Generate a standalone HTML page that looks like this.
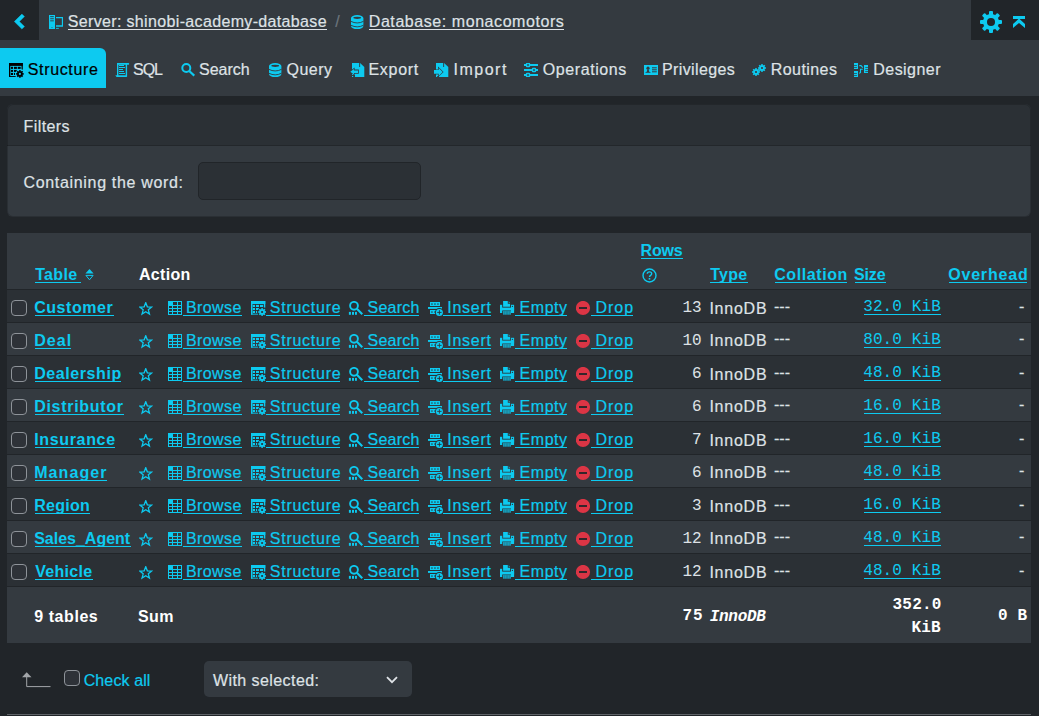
<!DOCTYPE html>
<html><head><meta charset="utf-8"><style>
html,body{margin:0;padding:0}
body{width:1039px;height:716px;overflow:hidden;background:#212529;position:relative;font-family:"Liberation Sans",sans-serif}
svg{display:block}
</style></head><body>
<div style="position:absolute;left:0px;top:0px;width:1039px;height:96px;background:#343a40;"></div>
<div style="position:absolute;left:0px;top:0px;width:39px;height:40px;background:#212529;"></div>
<div style="position:absolute;left:971px;top:0px;width:68px;height:40px;background:#212529;"></div>
<div style="position:absolute;left:0px;top:48px;width:106px;height:40px;background:#0dcaf0;border-radius:0 6px 0 0"></div>
<div style="position:absolute;left:7px;top:104px;width:1024px;height:113px;background:#343a40;border-radius:6px;overflow:hidden"></div>
<div style="position:absolute;left:7px;top:104px;width:1024px;height:41px;background:#2b3035;border-radius:6px 6px 0 0"></div>
<div style="position:absolute;left:7px;top:145px;width:1024px;height:1px;background:#23272b;"></div>
<div style="position:absolute;left:7px;top:104px;width:1024px;height:113px;background:transparent;border-radius:6px;box-sizing:border-box;border:1px solid rgba(0,0,0,0.18)"></div>
<div style="position:absolute;left:198px;top:162px;width:223px;height:38px;background:#2b3035;border-radius:5px;box-sizing:border-box;border:1px solid #212529"></div>
<div style="position:absolute;left:7px;top:233px;width:1024px;height:56px;background:#343a40;"></div>
<div style="position:absolute;left:7px;top:289px;width:1024px;height:1px;background:#212529;"></div>
<div style="position:absolute;left:7px;top:290px;width:1024px;height:32px;background:#2b3035;"></div>
<div style="position:absolute;left:7px;top:322px;width:1024px;height:1px;background:#212529;"></div>
<div style="position:absolute;left:7px;top:323px;width:1024px;height:32px;background:#343a40;"></div>
<div style="position:absolute;left:7px;top:355px;width:1024px;height:1px;background:#212529;"></div>
<div style="position:absolute;left:7px;top:356px;width:1024px;height:32px;background:#2b3035;"></div>
<div style="position:absolute;left:7px;top:388px;width:1024px;height:1px;background:#212529;"></div>
<div style="position:absolute;left:7px;top:389px;width:1024px;height:32px;background:#343a40;"></div>
<div style="position:absolute;left:7px;top:421px;width:1024px;height:1px;background:#212529;"></div>
<div style="position:absolute;left:7px;top:422px;width:1024px;height:32px;background:#2b3035;"></div>
<div style="position:absolute;left:7px;top:454px;width:1024px;height:1px;background:#212529;"></div>
<div style="position:absolute;left:7px;top:455px;width:1024px;height:32px;background:#343a40;"></div>
<div style="position:absolute;left:7px;top:487px;width:1024px;height:1px;background:#212529;"></div>
<div style="position:absolute;left:7px;top:488px;width:1024px;height:32px;background:#2b3035;"></div>
<div style="position:absolute;left:7px;top:520px;width:1024px;height:1px;background:#212529;"></div>
<div style="position:absolute;left:7px;top:521px;width:1024px;height:32px;background:#343a40;"></div>
<div style="position:absolute;left:7px;top:553px;width:1024px;height:1px;background:#212529;"></div>
<div style="position:absolute;left:7px;top:554px;width:1024px;height:32px;background:#2b3035;"></div>
<div style="position:absolute;left:7px;top:586px;width:1024px;height:1px;background:#212529;"></div>
<div style="position:absolute;left:7px;top:587px;width:1024px;height:56px;background:#343a40;"></div>
<div style="position:absolute;left:204px;top:661px;width:208px;height:36px;background:#343a40;border-radius:5px"></div>
<div style="position:absolute;left:7px;top:714px;width:1024px;height:1px;background:#5f6368;"></div>
<div style="position:absolute;left:68.00px;top:29px;width:259.00px;height:1px;background:#dee2e6"></div>
<div style="position:absolute;left:369.00px;top:29px;width:195.00px;height:1px;background:#dee2e6"></div>
<div style="position:absolute;left:35.00px;top:282px;width:46.00px;height:1px;background:#0dcaf0"></div>
<div style="position:absolute;left:641.00px;top:258px;width:42.00px;height:1px;background:#0dcaf0"></div>
<div style="position:absolute;left:710.00px;top:282px;width:38.00px;height:1px;background:#0dcaf0"></div>
<div style="position:absolute;left:775.00px;top:282px;width:72.00px;height:1px;background:#0dcaf0"></div>
<div style="position:absolute;left:855.00px;top:282px;width:31.00px;height:1px;background:#0dcaf0"></div>
<div style="position:absolute;left:949.00px;top:282px;width:78.00px;height:1px;background:#0dcaf0"></div>
<div style="position:absolute;left:35.00px;top:315px;width:78.50px;height:1px;background:#0dcaf0"></div>
<div style="position:absolute;left:182.50px;top:315px;width:59.00px;height:1px;background:#0dcaf0"></div>
<div style="position:absolute;left:266.00px;top:315px;width:74.00px;height:1px;background:#0dcaf0"></div>
<div style="position:absolute;left:364.00px;top:315px;width:55.00px;height:1px;background:#0dcaf0"></div>
<div style="position:absolute;left:443.30px;top:315px;width:48.20px;height:1px;background:#0dcaf0"></div>
<div style="position:absolute;left:515.30px;top:315px;width:51.70px;height:1px;background:#0dcaf0"></div>
<div style="position:absolute;left:591.00px;top:315px;width:41.80px;height:1px;background:#0dcaf0"></div>
<div style="position:absolute;left:864.00px;top:314px;width:76.50px;height:1px;background:#0dcaf0"></div>
<div style="position:absolute;left:11px;top:300px;width:16px;height:16px;box-sizing:border-box;border:1px solid #8e9399;border-radius:4px;background:#2e3238"></div>
<svg style="position:absolute;left:139px;top:301.7px" width="14" height="14" viewBox="0 0 14 14"><polygon points="6.75,0.70 8.34,4.82 12.74,5.05 9.32,7.83 10.45,12.10 6.75,9.70 3.05,12.10 4.18,7.83 0.76,5.05 5.16,4.82" fill="none" stroke="#0dcaf0" stroke-width="1.3" stroke-linejoin="miter"/></svg>
<svg style="position:absolute;left:168px;top:301px" width="14" height="14" viewBox="0 0 14 14"><rect x="0" y="0" width="14" height="14" fill="#0dcaf0"/><rect x="1" y="5" width="3" height="2" fill="#2b3035"/><rect x="1" y="8" width="3" height="2" fill="#2b3035"/><rect x="1" y="11" width="3" height="2" fill="#2b3035"/><rect x="5" y="1" width="4" height="3" fill="#2b3035"/><rect x="5" y="5" width="4" height="2" fill="#2b3035"/><rect x="5" y="8" width="4" height="2" fill="#2b3035"/><rect x="5" y="11" width="4" height="2" fill="#2b3035"/><rect x="10" y="1" width="3" height="3" fill="#2b3035"/><rect x="10" y="5" width="3" height="2" fill="#2b3035"/><rect x="10" y="8" width="3" height="2" fill="#2b3035"/><rect x="10" y="11" width="3" height="2" fill="#2b3035"/></svg>
<svg style="position:absolute;left:251px;top:301px" width="16" height="16" viewBox="0 0 16 16"><rect x="0" y="0" width="14.3" height="3" fill="#0dcaf0"/><rect x="0" y="0" width="1.5" height="13.6" fill="#0dcaf0"/><rect x="0" y="12.7" width="7" height="0.9" fill="#0dcaf0"/><rect x="12.8" y="0" width="1.5" height="6.6" fill="#0dcaf0"/><rect x="1.8" y="3.9" width="2.2" height="2.1" fill="#0dcaf0"/><rect x="5" y="3.9" width="3" height="2.1" fill="#0dcaf0"/><rect x="9" y="3.9" width="3" height="2.1" fill="#0dcaf0"/><rect x="1.8" y="7" width="2.2" height="2" fill="#0dcaf0"/><rect x="5" y="7" width="3" height="2" fill="#0dcaf0"/><rect x="1.8" y="9.9" width="2.2" height="2.1" fill="#0dcaf0"/><rect x="5" y="9.9" width="1.2" height="2.1" fill="#0dcaf0"/><circle cx="11.1" cy="11" r="4.7" fill="#2b3035"/><circle cx="11.1" cy="11" r="2.81" fill="#0dcaf0"/><rect x="10.28" y="7.10" width="1.64" height="3.90" fill="#0dcaf0" transform="rotate(0 11.1 11)"/><rect x="10.28" y="7.10" width="1.64" height="3.90" fill="#0dcaf0" transform="rotate(45 11.1 11)"/><rect x="10.28" y="7.10" width="1.64" height="3.90" fill="#0dcaf0" transform="rotate(90 11.1 11)"/><rect x="10.28" y="7.10" width="1.64" height="3.90" fill="#0dcaf0" transform="rotate(135 11.1 11)"/><rect x="10.28" y="7.10" width="1.64" height="3.90" fill="#0dcaf0" transform="rotate(180 11.1 11)"/><rect x="10.28" y="7.10" width="1.64" height="3.90" fill="#0dcaf0" transform="rotate(225 11.1 11)"/><rect x="10.28" y="7.10" width="1.64" height="3.90" fill="#0dcaf0" transform="rotate(270 11.1 11)"/><rect x="10.28" y="7.10" width="1.64" height="3.90" fill="#0dcaf0" transform="rotate(315 11.1 11)"/><circle cx="11.1" cy="11" r="1.09" fill="#2b3035"/></svg>
<svg style="position:absolute;left:348px;top:301px" width="15" height="15" viewBox="0 0 15 15"><circle cx="6" cy="4.8" r="3.9" fill="none" stroke="#0dcaf0" stroke-width="1.9"/><path d="M8.9 7.8L14.3 13.2" stroke="#0dcaf0" stroke-width="2.1"/><rect x="0.9" y="10.9" width="2" height="2.9" fill="#0dcaf0"/><rect x="4" y="10.9" width="2" height="2.9" fill="#0dcaf0"/><rect x="7" y="10.9" width="1.9" height="2.9" fill="#0dcaf0"/></svg>
<svg style="position:absolute;left:428px;top:301px" width="16" height="16" viewBox="0 0 16 16"><rect x="2" y="1" width="10" height="4" fill="#0dcaf0"/><rect x="0" y="6" width="14" height="1.9" fill="#0dcaf0"/><rect x="2" y="9" width="10" height="4" fill="#0dcaf0"/><rect x="3.3" y="2.4" width="1.3" height="1.3" fill="#2b3035"/><rect x="6.3" y="2.4" width="1.3" height="1.3" fill="#2b3035"/><rect x="9.3" y="2.4" width="1.3" height="1.3" fill="#2b3035"/><rect x="3.3" y="10.4" width="1.3" height="1.3" fill="#2b3035"/><rect x="6.3" y="10.4" width="1.3" height="1.3" fill="#2b3035"/><circle cx="11.4" cy="11.4" r="4.4" fill="#2b3035"/><circle cx="11.4" cy="11.4" r="3.5" fill="#0dcaf0"/><path d="M9.2 11.4H13.6M11.4 9.2V13.6" stroke="#2b3035" stroke-width="0.9"/></svg>
<svg style="position:absolute;left:500px;top:301px" width="15" height="15" viewBox="0 0 15 15"><path d="M3.1 -0.2H7.8V2.8H10.1V5.8H3.1Z" fill="#0dcaf0"/><path d="M8.7 0.2L10.1 1.8H8.7Z" fill="#0dcaf0"/><rect x="0" y="3.8" width="2.2" height="8.2" fill="#0dcaf0"/><rect x="11" y="3.8" width="3.1" height="8.2" fill="#0dcaf0"/><rect x="0" y="6.6" width="14.1" height="2.9" fill="#0dcaf0"/><circle cx="12.4" cy="5.4" r="0.6" fill="#2b3035"/><rect x="3.3" y="10" width="1.3" height="3.8" rx="0.5" fill="#0dcaf0"/><rect x="5.300000000000001" y="10" width="1.3" height="3.8" rx="0.5" fill="#0dcaf0"/><rect x="7.4" y="10" width="1.3" height="3.8" rx="0.5" fill="#0dcaf0"/><rect x="9.4" y="10" width="1.3" height="3.8" rx="0.5" fill="#0dcaf0"/></svg>
<svg style="position:absolute;left:576px;top:301px" width="15" height="15" viewBox="0 0 15 15"><circle cx="7" cy="7" r="7.1" fill="#dc3545"/><rect x="3" y="6.1" width="8" height="1.8" fill="#212529"/></svg>
<div style="position:absolute;left:35.00px;top:348px;width:35.90px;height:1px;background:#0dcaf0"></div>
<div style="position:absolute;left:182.50px;top:348px;width:59.00px;height:1px;background:#0dcaf0"></div>
<div style="position:absolute;left:266.00px;top:348px;width:74.00px;height:1px;background:#0dcaf0"></div>
<div style="position:absolute;left:364.00px;top:348px;width:55.00px;height:1px;background:#0dcaf0"></div>
<div style="position:absolute;left:443.30px;top:348px;width:48.20px;height:1px;background:#0dcaf0"></div>
<div style="position:absolute;left:515.30px;top:348px;width:51.70px;height:1px;background:#0dcaf0"></div>
<div style="position:absolute;left:591.00px;top:348px;width:41.80px;height:1px;background:#0dcaf0"></div>
<div style="position:absolute;left:864.00px;top:347px;width:76.50px;height:1px;background:#0dcaf0"></div>
<div style="position:absolute;left:11px;top:333px;width:16px;height:16px;box-sizing:border-box;border:1px solid #8e9399;border-radius:4px;background:#2e3238"></div>
<svg style="position:absolute;left:139px;top:334.7px" width="14" height="14" viewBox="0 0 14 14"><polygon points="6.75,0.70 8.34,4.82 12.74,5.05 9.32,7.83 10.45,12.10 6.75,9.70 3.05,12.10 4.18,7.83 0.76,5.05 5.16,4.82" fill="none" stroke="#0dcaf0" stroke-width="1.3" stroke-linejoin="miter"/></svg>
<svg style="position:absolute;left:168px;top:334px" width="14" height="14" viewBox="0 0 14 14"><rect x="0" y="0" width="14" height="14" fill="#0dcaf0"/><rect x="1" y="5" width="3" height="2" fill="#343a40"/><rect x="1" y="8" width="3" height="2" fill="#343a40"/><rect x="1" y="11" width="3" height="2" fill="#343a40"/><rect x="5" y="1" width="4" height="3" fill="#343a40"/><rect x="5" y="5" width="4" height="2" fill="#343a40"/><rect x="5" y="8" width="4" height="2" fill="#343a40"/><rect x="5" y="11" width="4" height="2" fill="#343a40"/><rect x="10" y="1" width="3" height="3" fill="#343a40"/><rect x="10" y="5" width="3" height="2" fill="#343a40"/><rect x="10" y="8" width="3" height="2" fill="#343a40"/><rect x="10" y="11" width="3" height="2" fill="#343a40"/></svg>
<svg style="position:absolute;left:251px;top:334px" width="16" height="16" viewBox="0 0 16 16"><rect x="0" y="0" width="14.3" height="3" fill="#0dcaf0"/><rect x="0" y="0" width="1.5" height="13.6" fill="#0dcaf0"/><rect x="0" y="12.7" width="7" height="0.9" fill="#0dcaf0"/><rect x="12.8" y="0" width="1.5" height="6.6" fill="#0dcaf0"/><rect x="1.8" y="3.9" width="2.2" height="2.1" fill="#0dcaf0"/><rect x="5" y="3.9" width="3" height="2.1" fill="#0dcaf0"/><rect x="9" y="3.9" width="3" height="2.1" fill="#0dcaf0"/><rect x="1.8" y="7" width="2.2" height="2" fill="#0dcaf0"/><rect x="5" y="7" width="3" height="2" fill="#0dcaf0"/><rect x="1.8" y="9.9" width="2.2" height="2.1" fill="#0dcaf0"/><rect x="5" y="9.9" width="1.2" height="2.1" fill="#0dcaf0"/><circle cx="11.1" cy="11" r="4.7" fill="#343a40"/><circle cx="11.1" cy="11" r="2.81" fill="#0dcaf0"/><rect x="10.28" y="7.10" width="1.64" height="3.90" fill="#0dcaf0" transform="rotate(0 11.1 11)"/><rect x="10.28" y="7.10" width="1.64" height="3.90" fill="#0dcaf0" transform="rotate(45 11.1 11)"/><rect x="10.28" y="7.10" width="1.64" height="3.90" fill="#0dcaf0" transform="rotate(90 11.1 11)"/><rect x="10.28" y="7.10" width="1.64" height="3.90" fill="#0dcaf0" transform="rotate(135 11.1 11)"/><rect x="10.28" y="7.10" width="1.64" height="3.90" fill="#0dcaf0" transform="rotate(180 11.1 11)"/><rect x="10.28" y="7.10" width="1.64" height="3.90" fill="#0dcaf0" transform="rotate(225 11.1 11)"/><rect x="10.28" y="7.10" width="1.64" height="3.90" fill="#0dcaf0" transform="rotate(270 11.1 11)"/><rect x="10.28" y="7.10" width="1.64" height="3.90" fill="#0dcaf0" transform="rotate(315 11.1 11)"/><circle cx="11.1" cy="11" r="1.09" fill="#343a40"/></svg>
<svg style="position:absolute;left:348px;top:334px" width="15" height="15" viewBox="0 0 15 15"><circle cx="6" cy="4.8" r="3.9" fill="none" stroke="#0dcaf0" stroke-width="1.9"/><path d="M8.9 7.8L14.3 13.2" stroke="#0dcaf0" stroke-width="2.1"/><rect x="0.9" y="10.9" width="2" height="2.9" fill="#0dcaf0"/><rect x="4" y="10.9" width="2" height="2.9" fill="#0dcaf0"/><rect x="7" y="10.9" width="1.9" height="2.9" fill="#0dcaf0"/></svg>
<svg style="position:absolute;left:428px;top:334px" width="16" height="16" viewBox="0 0 16 16"><rect x="2" y="1" width="10" height="4" fill="#0dcaf0"/><rect x="0" y="6" width="14" height="1.9" fill="#0dcaf0"/><rect x="2" y="9" width="10" height="4" fill="#0dcaf0"/><rect x="3.3" y="2.4" width="1.3" height="1.3" fill="#343a40"/><rect x="6.3" y="2.4" width="1.3" height="1.3" fill="#343a40"/><rect x="9.3" y="2.4" width="1.3" height="1.3" fill="#343a40"/><rect x="3.3" y="10.4" width="1.3" height="1.3" fill="#343a40"/><rect x="6.3" y="10.4" width="1.3" height="1.3" fill="#343a40"/><circle cx="11.4" cy="11.4" r="4.4" fill="#343a40"/><circle cx="11.4" cy="11.4" r="3.5" fill="#0dcaf0"/><path d="M9.2 11.4H13.6M11.4 9.2V13.6" stroke="#343a40" stroke-width="0.9"/></svg>
<svg style="position:absolute;left:500px;top:334px" width="15" height="15" viewBox="0 0 15 15"><path d="M3.1 -0.2H7.8V2.8H10.1V5.8H3.1Z" fill="#0dcaf0"/><path d="M8.7 0.2L10.1 1.8H8.7Z" fill="#0dcaf0"/><rect x="0" y="3.8" width="2.2" height="8.2" fill="#0dcaf0"/><rect x="11" y="3.8" width="3.1" height="8.2" fill="#0dcaf0"/><rect x="0" y="6.6" width="14.1" height="2.9" fill="#0dcaf0"/><circle cx="12.4" cy="5.4" r="0.6" fill="#343a40"/><rect x="3.3" y="10" width="1.3" height="3.8" rx="0.5" fill="#0dcaf0"/><rect x="5.300000000000001" y="10" width="1.3" height="3.8" rx="0.5" fill="#0dcaf0"/><rect x="7.4" y="10" width="1.3" height="3.8" rx="0.5" fill="#0dcaf0"/><rect x="9.4" y="10" width="1.3" height="3.8" rx="0.5" fill="#0dcaf0"/></svg>
<svg style="position:absolute;left:576px;top:334px" width="15" height="15" viewBox="0 0 15 15"><circle cx="7" cy="7" r="7.1" fill="#dc3545"/><rect x="3" y="6.1" width="8" height="1.8" fill="#212529"/></svg>
<div style="position:absolute;left:35.00px;top:381px;width:85.90px;height:1px;background:#0dcaf0"></div>
<div style="position:absolute;left:182.50px;top:381px;width:59.00px;height:1px;background:#0dcaf0"></div>
<div style="position:absolute;left:266.00px;top:381px;width:74.00px;height:1px;background:#0dcaf0"></div>
<div style="position:absolute;left:364.00px;top:381px;width:55.00px;height:1px;background:#0dcaf0"></div>
<div style="position:absolute;left:443.30px;top:381px;width:48.20px;height:1px;background:#0dcaf0"></div>
<div style="position:absolute;left:515.30px;top:381px;width:51.70px;height:1px;background:#0dcaf0"></div>
<div style="position:absolute;left:591.00px;top:381px;width:41.80px;height:1px;background:#0dcaf0"></div>
<div style="position:absolute;left:864.00px;top:380px;width:76.50px;height:1px;background:#0dcaf0"></div>
<div style="position:absolute;left:11px;top:366px;width:16px;height:16px;box-sizing:border-box;border:1px solid #8e9399;border-radius:4px;background:#2e3238"></div>
<svg style="position:absolute;left:139px;top:367.7px" width="14" height="14" viewBox="0 0 14 14"><polygon points="6.75,0.70 8.34,4.82 12.74,5.05 9.32,7.83 10.45,12.10 6.75,9.70 3.05,12.10 4.18,7.83 0.76,5.05 5.16,4.82" fill="none" stroke="#0dcaf0" stroke-width="1.3" stroke-linejoin="miter"/></svg>
<svg style="position:absolute;left:168px;top:367px" width="14" height="14" viewBox="0 0 14 14"><rect x="0" y="0" width="14" height="14" fill="#0dcaf0"/><rect x="1" y="5" width="3" height="2" fill="#2b3035"/><rect x="1" y="8" width="3" height="2" fill="#2b3035"/><rect x="1" y="11" width="3" height="2" fill="#2b3035"/><rect x="5" y="1" width="4" height="3" fill="#2b3035"/><rect x="5" y="5" width="4" height="2" fill="#2b3035"/><rect x="5" y="8" width="4" height="2" fill="#2b3035"/><rect x="5" y="11" width="4" height="2" fill="#2b3035"/><rect x="10" y="1" width="3" height="3" fill="#2b3035"/><rect x="10" y="5" width="3" height="2" fill="#2b3035"/><rect x="10" y="8" width="3" height="2" fill="#2b3035"/><rect x="10" y="11" width="3" height="2" fill="#2b3035"/></svg>
<svg style="position:absolute;left:251px;top:367px" width="16" height="16" viewBox="0 0 16 16"><rect x="0" y="0" width="14.3" height="3" fill="#0dcaf0"/><rect x="0" y="0" width="1.5" height="13.6" fill="#0dcaf0"/><rect x="0" y="12.7" width="7" height="0.9" fill="#0dcaf0"/><rect x="12.8" y="0" width="1.5" height="6.6" fill="#0dcaf0"/><rect x="1.8" y="3.9" width="2.2" height="2.1" fill="#0dcaf0"/><rect x="5" y="3.9" width="3" height="2.1" fill="#0dcaf0"/><rect x="9" y="3.9" width="3" height="2.1" fill="#0dcaf0"/><rect x="1.8" y="7" width="2.2" height="2" fill="#0dcaf0"/><rect x="5" y="7" width="3" height="2" fill="#0dcaf0"/><rect x="1.8" y="9.9" width="2.2" height="2.1" fill="#0dcaf0"/><rect x="5" y="9.9" width="1.2" height="2.1" fill="#0dcaf0"/><circle cx="11.1" cy="11" r="4.7" fill="#2b3035"/><circle cx="11.1" cy="11" r="2.81" fill="#0dcaf0"/><rect x="10.28" y="7.10" width="1.64" height="3.90" fill="#0dcaf0" transform="rotate(0 11.1 11)"/><rect x="10.28" y="7.10" width="1.64" height="3.90" fill="#0dcaf0" transform="rotate(45 11.1 11)"/><rect x="10.28" y="7.10" width="1.64" height="3.90" fill="#0dcaf0" transform="rotate(90 11.1 11)"/><rect x="10.28" y="7.10" width="1.64" height="3.90" fill="#0dcaf0" transform="rotate(135 11.1 11)"/><rect x="10.28" y="7.10" width="1.64" height="3.90" fill="#0dcaf0" transform="rotate(180 11.1 11)"/><rect x="10.28" y="7.10" width="1.64" height="3.90" fill="#0dcaf0" transform="rotate(225 11.1 11)"/><rect x="10.28" y="7.10" width="1.64" height="3.90" fill="#0dcaf0" transform="rotate(270 11.1 11)"/><rect x="10.28" y="7.10" width="1.64" height="3.90" fill="#0dcaf0" transform="rotate(315 11.1 11)"/><circle cx="11.1" cy="11" r="1.09" fill="#2b3035"/></svg>
<svg style="position:absolute;left:348px;top:367px" width="15" height="15" viewBox="0 0 15 15"><circle cx="6" cy="4.8" r="3.9" fill="none" stroke="#0dcaf0" stroke-width="1.9"/><path d="M8.9 7.8L14.3 13.2" stroke="#0dcaf0" stroke-width="2.1"/><rect x="0.9" y="10.9" width="2" height="2.9" fill="#0dcaf0"/><rect x="4" y="10.9" width="2" height="2.9" fill="#0dcaf0"/><rect x="7" y="10.9" width="1.9" height="2.9" fill="#0dcaf0"/></svg>
<svg style="position:absolute;left:428px;top:367px" width="16" height="16" viewBox="0 0 16 16"><rect x="2" y="1" width="10" height="4" fill="#0dcaf0"/><rect x="0" y="6" width="14" height="1.9" fill="#0dcaf0"/><rect x="2" y="9" width="10" height="4" fill="#0dcaf0"/><rect x="3.3" y="2.4" width="1.3" height="1.3" fill="#2b3035"/><rect x="6.3" y="2.4" width="1.3" height="1.3" fill="#2b3035"/><rect x="9.3" y="2.4" width="1.3" height="1.3" fill="#2b3035"/><rect x="3.3" y="10.4" width="1.3" height="1.3" fill="#2b3035"/><rect x="6.3" y="10.4" width="1.3" height="1.3" fill="#2b3035"/><circle cx="11.4" cy="11.4" r="4.4" fill="#2b3035"/><circle cx="11.4" cy="11.4" r="3.5" fill="#0dcaf0"/><path d="M9.2 11.4H13.6M11.4 9.2V13.6" stroke="#2b3035" stroke-width="0.9"/></svg>
<svg style="position:absolute;left:500px;top:367px" width="15" height="15" viewBox="0 0 15 15"><path d="M3.1 -0.2H7.8V2.8H10.1V5.8H3.1Z" fill="#0dcaf0"/><path d="M8.7 0.2L10.1 1.8H8.7Z" fill="#0dcaf0"/><rect x="0" y="3.8" width="2.2" height="8.2" fill="#0dcaf0"/><rect x="11" y="3.8" width="3.1" height="8.2" fill="#0dcaf0"/><rect x="0" y="6.6" width="14.1" height="2.9" fill="#0dcaf0"/><circle cx="12.4" cy="5.4" r="0.6" fill="#2b3035"/><rect x="3.3" y="10" width="1.3" height="3.8" rx="0.5" fill="#0dcaf0"/><rect x="5.300000000000001" y="10" width="1.3" height="3.8" rx="0.5" fill="#0dcaf0"/><rect x="7.4" y="10" width="1.3" height="3.8" rx="0.5" fill="#0dcaf0"/><rect x="9.4" y="10" width="1.3" height="3.8" rx="0.5" fill="#0dcaf0"/></svg>
<svg style="position:absolute;left:576px;top:367px" width="15" height="15" viewBox="0 0 15 15"><circle cx="7" cy="7" r="7.1" fill="#dc3545"/><rect x="3" y="6.1" width="8" height="1.8" fill="#212529"/></svg>
<div style="position:absolute;left:35.00px;top:414px;width:88.80px;height:1px;background:#0dcaf0"></div>
<div style="position:absolute;left:182.50px;top:414px;width:59.00px;height:1px;background:#0dcaf0"></div>
<div style="position:absolute;left:266.00px;top:414px;width:74.00px;height:1px;background:#0dcaf0"></div>
<div style="position:absolute;left:364.00px;top:414px;width:55.00px;height:1px;background:#0dcaf0"></div>
<div style="position:absolute;left:443.30px;top:414px;width:48.20px;height:1px;background:#0dcaf0"></div>
<div style="position:absolute;left:515.30px;top:414px;width:51.70px;height:1px;background:#0dcaf0"></div>
<div style="position:absolute;left:591.00px;top:414px;width:41.80px;height:1px;background:#0dcaf0"></div>
<div style="position:absolute;left:864.00px;top:413px;width:76.50px;height:1px;background:#0dcaf0"></div>
<div style="position:absolute;left:11px;top:399px;width:16px;height:16px;box-sizing:border-box;border:1px solid #8e9399;border-radius:4px;background:#2e3238"></div>
<svg style="position:absolute;left:139px;top:400.7px" width="14" height="14" viewBox="0 0 14 14"><polygon points="6.75,0.70 8.34,4.82 12.74,5.05 9.32,7.83 10.45,12.10 6.75,9.70 3.05,12.10 4.18,7.83 0.76,5.05 5.16,4.82" fill="none" stroke="#0dcaf0" stroke-width="1.3" stroke-linejoin="miter"/></svg>
<svg style="position:absolute;left:168px;top:400px" width="14" height="14" viewBox="0 0 14 14"><rect x="0" y="0" width="14" height="14" fill="#0dcaf0"/><rect x="1" y="5" width="3" height="2" fill="#343a40"/><rect x="1" y="8" width="3" height="2" fill="#343a40"/><rect x="1" y="11" width="3" height="2" fill="#343a40"/><rect x="5" y="1" width="4" height="3" fill="#343a40"/><rect x="5" y="5" width="4" height="2" fill="#343a40"/><rect x="5" y="8" width="4" height="2" fill="#343a40"/><rect x="5" y="11" width="4" height="2" fill="#343a40"/><rect x="10" y="1" width="3" height="3" fill="#343a40"/><rect x="10" y="5" width="3" height="2" fill="#343a40"/><rect x="10" y="8" width="3" height="2" fill="#343a40"/><rect x="10" y="11" width="3" height="2" fill="#343a40"/></svg>
<svg style="position:absolute;left:251px;top:400px" width="16" height="16" viewBox="0 0 16 16"><rect x="0" y="0" width="14.3" height="3" fill="#0dcaf0"/><rect x="0" y="0" width="1.5" height="13.6" fill="#0dcaf0"/><rect x="0" y="12.7" width="7" height="0.9" fill="#0dcaf0"/><rect x="12.8" y="0" width="1.5" height="6.6" fill="#0dcaf0"/><rect x="1.8" y="3.9" width="2.2" height="2.1" fill="#0dcaf0"/><rect x="5" y="3.9" width="3" height="2.1" fill="#0dcaf0"/><rect x="9" y="3.9" width="3" height="2.1" fill="#0dcaf0"/><rect x="1.8" y="7" width="2.2" height="2" fill="#0dcaf0"/><rect x="5" y="7" width="3" height="2" fill="#0dcaf0"/><rect x="1.8" y="9.9" width="2.2" height="2.1" fill="#0dcaf0"/><rect x="5" y="9.9" width="1.2" height="2.1" fill="#0dcaf0"/><circle cx="11.1" cy="11" r="4.7" fill="#343a40"/><circle cx="11.1" cy="11" r="2.81" fill="#0dcaf0"/><rect x="10.28" y="7.10" width="1.64" height="3.90" fill="#0dcaf0" transform="rotate(0 11.1 11)"/><rect x="10.28" y="7.10" width="1.64" height="3.90" fill="#0dcaf0" transform="rotate(45 11.1 11)"/><rect x="10.28" y="7.10" width="1.64" height="3.90" fill="#0dcaf0" transform="rotate(90 11.1 11)"/><rect x="10.28" y="7.10" width="1.64" height="3.90" fill="#0dcaf0" transform="rotate(135 11.1 11)"/><rect x="10.28" y="7.10" width="1.64" height="3.90" fill="#0dcaf0" transform="rotate(180 11.1 11)"/><rect x="10.28" y="7.10" width="1.64" height="3.90" fill="#0dcaf0" transform="rotate(225 11.1 11)"/><rect x="10.28" y="7.10" width="1.64" height="3.90" fill="#0dcaf0" transform="rotate(270 11.1 11)"/><rect x="10.28" y="7.10" width="1.64" height="3.90" fill="#0dcaf0" transform="rotate(315 11.1 11)"/><circle cx="11.1" cy="11" r="1.09" fill="#343a40"/></svg>
<svg style="position:absolute;left:348px;top:400px" width="15" height="15" viewBox="0 0 15 15"><circle cx="6" cy="4.8" r="3.9" fill="none" stroke="#0dcaf0" stroke-width="1.9"/><path d="M8.9 7.8L14.3 13.2" stroke="#0dcaf0" stroke-width="2.1"/><rect x="0.9" y="10.9" width="2" height="2.9" fill="#0dcaf0"/><rect x="4" y="10.9" width="2" height="2.9" fill="#0dcaf0"/><rect x="7" y="10.9" width="1.9" height="2.9" fill="#0dcaf0"/></svg>
<svg style="position:absolute;left:428px;top:400px" width="16" height="16" viewBox="0 0 16 16"><rect x="2" y="1" width="10" height="4" fill="#0dcaf0"/><rect x="0" y="6" width="14" height="1.9" fill="#0dcaf0"/><rect x="2" y="9" width="10" height="4" fill="#0dcaf0"/><rect x="3.3" y="2.4" width="1.3" height="1.3" fill="#343a40"/><rect x="6.3" y="2.4" width="1.3" height="1.3" fill="#343a40"/><rect x="9.3" y="2.4" width="1.3" height="1.3" fill="#343a40"/><rect x="3.3" y="10.4" width="1.3" height="1.3" fill="#343a40"/><rect x="6.3" y="10.4" width="1.3" height="1.3" fill="#343a40"/><circle cx="11.4" cy="11.4" r="4.4" fill="#343a40"/><circle cx="11.4" cy="11.4" r="3.5" fill="#0dcaf0"/><path d="M9.2 11.4H13.6M11.4 9.2V13.6" stroke="#343a40" stroke-width="0.9"/></svg>
<svg style="position:absolute;left:500px;top:400px" width="15" height="15" viewBox="0 0 15 15"><path d="M3.1 -0.2H7.8V2.8H10.1V5.8H3.1Z" fill="#0dcaf0"/><path d="M8.7 0.2L10.1 1.8H8.7Z" fill="#0dcaf0"/><rect x="0" y="3.8" width="2.2" height="8.2" fill="#0dcaf0"/><rect x="11" y="3.8" width="3.1" height="8.2" fill="#0dcaf0"/><rect x="0" y="6.6" width="14.1" height="2.9" fill="#0dcaf0"/><circle cx="12.4" cy="5.4" r="0.6" fill="#343a40"/><rect x="3.3" y="10" width="1.3" height="3.8" rx="0.5" fill="#0dcaf0"/><rect x="5.300000000000001" y="10" width="1.3" height="3.8" rx="0.5" fill="#0dcaf0"/><rect x="7.4" y="10" width="1.3" height="3.8" rx="0.5" fill="#0dcaf0"/><rect x="9.4" y="10" width="1.3" height="3.8" rx="0.5" fill="#0dcaf0"/></svg>
<svg style="position:absolute;left:576px;top:400px" width="15" height="15" viewBox="0 0 15 15"><circle cx="7" cy="7" r="7.1" fill="#dc3545"/><rect x="3" y="6.1" width="8" height="1.8" fill="#212529"/></svg>
<div style="position:absolute;left:35.00px;top:447px;width:80.00px;height:1px;background:#0dcaf0"></div>
<div style="position:absolute;left:182.50px;top:447px;width:59.00px;height:1px;background:#0dcaf0"></div>
<div style="position:absolute;left:266.00px;top:447px;width:74.00px;height:1px;background:#0dcaf0"></div>
<div style="position:absolute;left:364.00px;top:447px;width:55.00px;height:1px;background:#0dcaf0"></div>
<div style="position:absolute;left:443.30px;top:447px;width:48.20px;height:1px;background:#0dcaf0"></div>
<div style="position:absolute;left:515.30px;top:447px;width:51.70px;height:1px;background:#0dcaf0"></div>
<div style="position:absolute;left:591.00px;top:447px;width:41.80px;height:1px;background:#0dcaf0"></div>
<div style="position:absolute;left:864.00px;top:446px;width:76.50px;height:1px;background:#0dcaf0"></div>
<div style="position:absolute;left:11px;top:432px;width:16px;height:16px;box-sizing:border-box;border:1px solid #8e9399;border-radius:4px;background:#2e3238"></div>
<svg style="position:absolute;left:139px;top:433.7px" width="14" height="14" viewBox="0 0 14 14"><polygon points="6.75,0.70 8.34,4.82 12.74,5.05 9.32,7.83 10.45,12.10 6.75,9.70 3.05,12.10 4.18,7.83 0.76,5.05 5.16,4.82" fill="none" stroke="#0dcaf0" stroke-width="1.3" stroke-linejoin="miter"/></svg>
<svg style="position:absolute;left:168px;top:433px" width="14" height="14" viewBox="0 0 14 14"><rect x="0" y="0" width="14" height="14" fill="#0dcaf0"/><rect x="1" y="5" width="3" height="2" fill="#2b3035"/><rect x="1" y="8" width="3" height="2" fill="#2b3035"/><rect x="1" y="11" width="3" height="2" fill="#2b3035"/><rect x="5" y="1" width="4" height="3" fill="#2b3035"/><rect x="5" y="5" width="4" height="2" fill="#2b3035"/><rect x="5" y="8" width="4" height="2" fill="#2b3035"/><rect x="5" y="11" width="4" height="2" fill="#2b3035"/><rect x="10" y="1" width="3" height="3" fill="#2b3035"/><rect x="10" y="5" width="3" height="2" fill="#2b3035"/><rect x="10" y="8" width="3" height="2" fill="#2b3035"/><rect x="10" y="11" width="3" height="2" fill="#2b3035"/></svg>
<svg style="position:absolute;left:251px;top:433px" width="16" height="16" viewBox="0 0 16 16"><rect x="0" y="0" width="14.3" height="3" fill="#0dcaf0"/><rect x="0" y="0" width="1.5" height="13.6" fill="#0dcaf0"/><rect x="0" y="12.7" width="7" height="0.9" fill="#0dcaf0"/><rect x="12.8" y="0" width="1.5" height="6.6" fill="#0dcaf0"/><rect x="1.8" y="3.9" width="2.2" height="2.1" fill="#0dcaf0"/><rect x="5" y="3.9" width="3" height="2.1" fill="#0dcaf0"/><rect x="9" y="3.9" width="3" height="2.1" fill="#0dcaf0"/><rect x="1.8" y="7" width="2.2" height="2" fill="#0dcaf0"/><rect x="5" y="7" width="3" height="2" fill="#0dcaf0"/><rect x="1.8" y="9.9" width="2.2" height="2.1" fill="#0dcaf0"/><rect x="5" y="9.9" width="1.2" height="2.1" fill="#0dcaf0"/><circle cx="11.1" cy="11" r="4.7" fill="#2b3035"/><circle cx="11.1" cy="11" r="2.81" fill="#0dcaf0"/><rect x="10.28" y="7.10" width="1.64" height="3.90" fill="#0dcaf0" transform="rotate(0 11.1 11)"/><rect x="10.28" y="7.10" width="1.64" height="3.90" fill="#0dcaf0" transform="rotate(45 11.1 11)"/><rect x="10.28" y="7.10" width="1.64" height="3.90" fill="#0dcaf0" transform="rotate(90 11.1 11)"/><rect x="10.28" y="7.10" width="1.64" height="3.90" fill="#0dcaf0" transform="rotate(135 11.1 11)"/><rect x="10.28" y="7.10" width="1.64" height="3.90" fill="#0dcaf0" transform="rotate(180 11.1 11)"/><rect x="10.28" y="7.10" width="1.64" height="3.90" fill="#0dcaf0" transform="rotate(225 11.1 11)"/><rect x="10.28" y="7.10" width="1.64" height="3.90" fill="#0dcaf0" transform="rotate(270 11.1 11)"/><rect x="10.28" y="7.10" width="1.64" height="3.90" fill="#0dcaf0" transform="rotate(315 11.1 11)"/><circle cx="11.1" cy="11" r="1.09" fill="#2b3035"/></svg>
<svg style="position:absolute;left:348px;top:433px" width="15" height="15" viewBox="0 0 15 15"><circle cx="6" cy="4.8" r="3.9" fill="none" stroke="#0dcaf0" stroke-width="1.9"/><path d="M8.9 7.8L14.3 13.2" stroke="#0dcaf0" stroke-width="2.1"/><rect x="0.9" y="10.9" width="2" height="2.9" fill="#0dcaf0"/><rect x="4" y="10.9" width="2" height="2.9" fill="#0dcaf0"/><rect x="7" y="10.9" width="1.9" height="2.9" fill="#0dcaf0"/></svg>
<svg style="position:absolute;left:428px;top:433px" width="16" height="16" viewBox="0 0 16 16"><rect x="2" y="1" width="10" height="4" fill="#0dcaf0"/><rect x="0" y="6" width="14" height="1.9" fill="#0dcaf0"/><rect x="2" y="9" width="10" height="4" fill="#0dcaf0"/><rect x="3.3" y="2.4" width="1.3" height="1.3" fill="#2b3035"/><rect x="6.3" y="2.4" width="1.3" height="1.3" fill="#2b3035"/><rect x="9.3" y="2.4" width="1.3" height="1.3" fill="#2b3035"/><rect x="3.3" y="10.4" width="1.3" height="1.3" fill="#2b3035"/><rect x="6.3" y="10.4" width="1.3" height="1.3" fill="#2b3035"/><circle cx="11.4" cy="11.4" r="4.4" fill="#2b3035"/><circle cx="11.4" cy="11.4" r="3.5" fill="#0dcaf0"/><path d="M9.2 11.4H13.6M11.4 9.2V13.6" stroke="#2b3035" stroke-width="0.9"/></svg>
<svg style="position:absolute;left:500px;top:433px" width="15" height="15" viewBox="0 0 15 15"><path d="M3.1 -0.2H7.8V2.8H10.1V5.8H3.1Z" fill="#0dcaf0"/><path d="M8.7 0.2L10.1 1.8H8.7Z" fill="#0dcaf0"/><rect x="0" y="3.8" width="2.2" height="8.2" fill="#0dcaf0"/><rect x="11" y="3.8" width="3.1" height="8.2" fill="#0dcaf0"/><rect x="0" y="6.6" width="14.1" height="2.9" fill="#0dcaf0"/><circle cx="12.4" cy="5.4" r="0.6" fill="#2b3035"/><rect x="3.3" y="10" width="1.3" height="3.8" rx="0.5" fill="#0dcaf0"/><rect x="5.300000000000001" y="10" width="1.3" height="3.8" rx="0.5" fill="#0dcaf0"/><rect x="7.4" y="10" width="1.3" height="3.8" rx="0.5" fill="#0dcaf0"/><rect x="9.4" y="10" width="1.3" height="3.8" rx="0.5" fill="#0dcaf0"/></svg>
<svg style="position:absolute;left:576px;top:433px" width="15" height="15" viewBox="0 0 15 15"><circle cx="7" cy="7" r="7.1" fill="#dc3545"/><rect x="3" y="6.1" width="8" height="1.8" fill="#212529"/></svg>
<div style="position:absolute;left:35.00px;top:480px;width:72.20px;height:1px;background:#0dcaf0"></div>
<div style="position:absolute;left:182.50px;top:480px;width:59.00px;height:1px;background:#0dcaf0"></div>
<div style="position:absolute;left:266.00px;top:480px;width:74.00px;height:1px;background:#0dcaf0"></div>
<div style="position:absolute;left:364.00px;top:480px;width:55.00px;height:1px;background:#0dcaf0"></div>
<div style="position:absolute;left:443.30px;top:480px;width:48.20px;height:1px;background:#0dcaf0"></div>
<div style="position:absolute;left:515.30px;top:480px;width:51.70px;height:1px;background:#0dcaf0"></div>
<div style="position:absolute;left:591.00px;top:480px;width:41.80px;height:1px;background:#0dcaf0"></div>
<div style="position:absolute;left:864.00px;top:479px;width:76.50px;height:1px;background:#0dcaf0"></div>
<div style="position:absolute;left:11px;top:465px;width:16px;height:16px;box-sizing:border-box;border:1px solid #8e9399;border-radius:4px;background:#2e3238"></div>
<svg style="position:absolute;left:139px;top:466.7px" width="14" height="14" viewBox="0 0 14 14"><polygon points="6.75,0.70 8.34,4.82 12.74,5.05 9.32,7.83 10.45,12.10 6.75,9.70 3.05,12.10 4.18,7.83 0.76,5.05 5.16,4.82" fill="none" stroke="#0dcaf0" stroke-width="1.3" stroke-linejoin="miter"/></svg>
<svg style="position:absolute;left:168px;top:466px" width="14" height="14" viewBox="0 0 14 14"><rect x="0" y="0" width="14" height="14" fill="#0dcaf0"/><rect x="1" y="5" width="3" height="2" fill="#343a40"/><rect x="1" y="8" width="3" height="2" fill="#343a40"/><rect x="1" y="11" width="3" height="2" fill="#343a40"/><rect x="5" y="1" width="4" height="3" fill="#343a40"/><rect x="5" y="5" width="4" height="2" fill="#343a40"/><rect x="5" y="8" width="4" height="2" fill="#343a40"/><rect x="5" y="11" width="4" height="2" fill="#343a40"/><rect x="10" y="1" width="3" height="3" fill="#343a40"/><rect x="10" y="5" width="3" height="2" fill="#343a40"/><rect x="10" y="8" width="3" height="2" fill="#343a40"/><rect x="10" y="11" width="3" height="2" fill="#343a40"/></svg>
<svg style="position:absolute;left:251px;top:466px" width="16" height="16" viewBox="0 0 16 16"><rect x="0" y="0" width="14.3" height="3" fill="#0dcaf0"/><rect x="0" y="0" width="1.5" height="13.6" fill="#0dcaf0"/><rect x="0" y="12.7" width="7" height="0.9" fill="#0dcaf0"/><rect x="12.8" y="0" width="1.5" height="6.6" fill="#0dcaf0"/><rect x="1.8" y="3.9" width="2.2" height="2.1" fill="#0dcaf0"/><rect x="5" y="3.9" width="3" height="2.1" fill="#0dcaf0"/><rect x="9" y="3.9" width="3" height="2.1" fill="#0dcaf0"/><rect x="1.8" y="7" width="2.2" height="2" fill="#0dcaf0"/><rect x="5" y="7" width="3" height="2" fill="#0dcaf0"/><rect x="1.8" y="9.9" width="2.2" height="2.1" fill="#0dcaf0"/><rect x="5" y="9.9" width="1.2" height="2.1" fill="#0dcaf0"/><circle cx="11.1" cy="11" r="4.7" fill="#343a40"/><circle cx="11.1" cy="11" r="2.81" fill="#0dcaf0"/><rect x="10.28" y="7.10" width="1.64" height="3.90" fill="#0dcaf0" transform="rotate(0 11.1 11)"/><rect x="10.28" y="7.10" width="1.64" height="3.90" fill="#0dcaf0" transform="rotate(45 11.1 11)"/><rect x="10.28" y="7.10" width="1.64" height="3.90" fill="#0dcaf0" transform="rotate(90 11.1 11)"/><rect x="10.28" y="7.10" width="1.64" height="3.90" fill="#0dcaf0" transform="rotate(135 11.1 11)"/><rect x="10.28" y="7.10" width="1.64" height="3.90" fill="#0dcaf0" transform="rotate(180 11.1 11)"/><rect x="10.28" y="7.10" width="1.64" height="3.90" fill="#0dcaf0" transform="rotate(225 11.1 11)"/><rect x="10.28" y="7.10" width="1.64" height="3.90" fill="#0dcaf0" transform="rotate(270 11.1 11)"/><rect x="10.28" y="7.10" width="1.64" height="3.90" fill="#0dcaf0" transform="rotate(315 11.1 11)"/><circle cx="11.1" cy="11" r="1.09" fill="#343a40"/></svg>
<svg style="position:absolute;left:348px;top:466px" width="15" height="15" viewBox="0 0 15 15"><circle cx="6" cy="4.8" r="3.9" fill="none" stroke="#0dcaf0" stroke-width="1.9"/><path d="M8.9 7.8L14.3 13.2" stroke="#0dcaf0" stroke-width="2.1"/><rect x="0.9" y="10.9" width="2" height="2.9" fill="#0dcaf0"/><rect x="4" y="10.9" width="2" height="2.9" fill="#0dcaf0"/><rect x="7" y="10.9" width="1.9" height="2.9" fill="#0dcaf0"/></svg>
<svg style="position:absolute;left:428px;top:466px" width="16" height="16" viewBox="0 0 16 16"><rect x="2" y="1" width="10" height="4" fill="#0dcaf0"/><rect x="0" y="6" width="14" height="1.9" fill="#0dcaf0"/><rect x="2" y="9" width="10" height="4" fill="#0dcaf0"/><rect x="3.3" y="2.4" width="1.3" height="1.3" fill="#343a40"/><rect x="6.3" y="2.4" width="1.3" height="1.3" fill="#343a40"/><rect x="9.3" y="2.4" width="1.3" height="1.3" fill="#343a40"/><rect x="3.3" y="10.4" width="1.3" height="1.3" fill="#343a40"/><rect x="6.3" y="10.4" width="1.3" height="1.3" fill="#343a40"/><circle cx="11.4" cy="11.4" r="4.4" fill="#343a40"/><circle cx="11.4" cy="11.4" r="3.5" fill="#0dcaf0"/><path d="M9.2 11.4H13.6M11.4 9.2V13.6" stroke="#343a40" stroke-width="0.9"/></svg>
<svg style="position:absolute;left:500px;top:466px" width="15" height="15" viewBox="0 0 15 15"><path d="M3.1 -0.2H7.8V2.8H10.1V5.8H3.1Z" fill="#0dcaf0"/><path d="M8.7 0.2L10.1 1.8H8.7Z" fill="#0dcaf0"/><rect x="0" y="3.8" width="2.2" height="8.2" fill="#0dcaf0"/><rect x="11" y="3.8" width="3.1" height="8.2" fill="#0dcaf0"/><rect x="0" y="6.6" width="14.1" height="2.9" fill="#0dcaf0"/><circle cx="12.4" cy="5.4" r="0.6" fill="#343a40"/><rect x="3.3" y="10" width="1.3" height="3.8" rx="0.5" fill="#0dcaf0"/><rect x="5.300000000000001" y="10" width="1.3" height="3.8" rx="0.5" fill="#0dcaf0"/><rect x="7.4" y="10" width="1.3" height="3.8" rx="0.5" fill="#0dcaf0"/><rect x="9.4" y="10" width="1.3" height="3.8" rx="0.5" fill="#0dcaf0"/></svg>
<svg style="position:absolute;left:576px;top:466px" width="15" height="15" viewBox="0 0 15 15"><circle cx="7" cy="7" r="7.1" fill="#dc3545"/><rect x="3" y="6.1" width="8" height="1.8" fill="#212529"/></svg>
<div style="position:absolute;left:35.00px;top:513px;width:55.10px;height:1px;background:#0dcaf0"></div>
<div style="position:absolute;left:182.50px;top:513px;width:59.00px;height:1px;background:#0dcaf0"></div>
<div style="position:absolute;left:266.00px;top:513px;width:74.00px;height:1px;background:#0dcaf0"></div>
<div style="position:absolute;left:364.00px;top:513px;width:55.00px;height:1px;background:#0dcaf0"></div>
<div style="position:absolute;left:443.30px;top:513px;width:48.20px;height:1px;background:#0dcaf0"></div>
<div style="position:absolute;left:515.30px;top:513px;width:51.70px;height:1px;background:#0dcaf0"></div>
<div style="position:absolute;left:591.00px;top:513px;width:41.80px;height:1px;background:#0dcaf0"></div>
<div style="position:absolute;left:864.00px;top:512px;width:76.50px;height:1px;background:#0dcaf0"></div>
<div style="position:absolute;left:11px;top:498px;width:16px;height:16px;box-sizing:border-box;border:1px solid #8e9399;border-radius:4px;background:#2e3238"></div>
<svg style="position:absolute;left:139px;top:499.7px" width="14" height="14" viewBox="0 0 14 14"><polygon points="6.75,0.70 8.34,4.82 12.74,5.05 9.32,7.83 10.45,12.10 6.75,9.70 3.05,12.10 4.18,7.83 0.76,5.05 5.16,4.82" fill="none" stroke="#0dcaf0" stroke-width="1.3" stroke-linejoin="miter"/></svg>
<svg style="position:absolute;left:168px;top:499px" width="14" height="14" viewBox="0 0 14 14"><rect x="0" y="0" width="14" height="14" fill="#0dcaf0"/><rect x="1" y="5" width="3" height="2" fill="#2b3035"/><rect x="1" y="8" width="3" height="2" fill="#2b3035"/><rect x="1" y="11" width="3" height="2" fill="#2b3035"/><rect x="5" y="1" width="4" height="3" fill="#2b3035"/><rect x="5" y="5" width="4" height="2" fill="#2b3035"/><rect x="5" y="8" width="4" height="2" fill="#2b3035"/><rect x="5" y="11" width="4" height="2" fill="#2b3035"/><rect x="10" y="1" width="3" height="3" fill="#2b3035"/><rect x="10" y="5" width="3" height="2" fill="#2b3035"/><rect x="10" y="8" width="3" height="2" fill="#2b3035"/><rect x="10" y="11" width="3" height="2" fill="#2b3035"/></svg>
<svg style="position:absolute;left:251px;top:499px" width="16" height="16" viewBox="0 0 16 16"><rect x="0" y="0" width="14.3" height="3" fill="#0dcaf0"/><rect x="0" y="0" width="1.5" height="13.6" fill="#0dcaf0"/><rect x="0" y="12.7" width="7" height="0.9" fill="#0dcaf0"/><rect x="12.8" y="0" width="1.5" height="6.6" fill="#0dcaf0"/><rect x="1.8" y="3.9" width="2.2" height="2.1" fill="#0dcaf0"/><rect x="5" y="3.9" width="3" height="2.1" fill="#0dcaf0"/><rect x="9" y="3.9" width="3" height="2.1" fill="#0dcaf0"/><rect x="1.8" y="7" width="2.2" height="2" fill="#0dcaf0"/><rect x="5" y="7" width="3" height="2" fill="#0dcaf0"/><rect x="1.8" y="9.9" width="2.2" height="2.1" fill="#0dcaf0"/><rect x="5" y="9.9" width="1.2" height="2.1" fill="#0dcaf0"/><circle cx="11.1" cy="11" r="4.7" fill="#2b3035"/><circle cx="11.1" cy="11" r="2.81" fill="#0dcaf0"/><rect x="10.28" y="7.10" width="1.64" height="3.90" fill="#0dcaf0" transform="rotate(0 11.1 11)"/><rect x="10.28" y="7.10" width="1.64" height="3.90" fill="#0dcaf0" transform="rotate(45 11.1 11)"/><rect x="10.28" y="7.10" width="1.64" height="3.90" fill="#0dcaf0" transform="rotate(90 11.1 11)"/><rect x="10.28" y="7.10" width="1.64" height="3.90" fill="#0dcaf0" transform="rotate(135 11.1 11)"/><rect x="10.28" y="7.10" width="1.64" height="3.90" fill="#0dcaf0" transform="rotate(180 11.1 11)"/><rect x="10.28" y="7.10" width="1.64" height="3.90" fill="#0dcaf0" transform="rotate(225 11.1 11)"/><rect x="10.28" y="7.10" width="1.64" height="3.90" fill="#0dcaf0" transform="rotate(270 11.1 11)"/><rect x="10.28" y="7.10" width="1.64" height="3.90" fill="#0dcaf0" transform="rotate(315 11.1 11)"/><circle cx="11.1" cy="11" r="1.09" fill="#2b3035"/></svg>
<svg style="position:absolute;left:348px;top:499px" width="15" height="15" viewBox="0 0 15 15"><circle cx="6" cy="4.8" r="3.9" fill="none" stroke="#0dcaf0" stroke-width="1.9"/><path d="M8.9 7.8L14.3 13.2" stroke="#0dcaf0" stroke-width="2.1"/><rect x="0.9" y="10.9" width="2" height="2.9" fill="#0dcaf0"/><rect x="4" y="10.9" width="2" height="2.9" fill="#0dcaf0"/><rect x="7" y="10.9" width="1.9" height="2.9" fill="#0dcaf0"/></svg>
<svg style="position:absolute;left:428px;top:499px" width="16" height="16" viewBox="0 0 16 16"><rect x="2" y="1" width="10" height="4" fill="#0dcaf0"/><rect x="0" y="6" width="14" height="1.9" fill="#0dcaf0"/><rect x="2" y="9" width="10" height="4" fill="#0dcaf0"/><rect x="3.3" y="2.4" width="1.3" height="1.3" fill="#2b3035"/><rect x="6.3" y="2.4" width="1.3" height="1.3" fill="#2b3035"/><rect x="9.3" y="2.4" width="1.3" height="1.3" fill="#2b3035"/><rect x="3.3" y="10.4" width="1.3" height="1.3" fill="#2b3035"/><rect x="6.3" y="10.4" width="1.3" height="1.3" fill="#2b3035"/><circle cx="11.4" cy="11.4" r="4.4" fill="#2b3035"/><circle cx="11.4" cy="11.4" r="3.5" fill="#0dcaf0"/><path d="M9.2 11.4H13.6M11.4 9.2V13.6" stroke="#2b3035" stroke-width="0.9"/></svg>
<svg style="position:absolute;left:500px;top:499px" width="15" height="15" viewBox="0 0 15 15"><path d="M3.1 -0.2H7.8V2.8H10.1V5.8H3.1Z" fill="#0dcaf0"/><path d="M8.7 0.2L10.1 1.8H8.7Z" fill="#0dcaf0"/><rect x="0" y="3.8" width="2.2" height="8.2" fill="#0dcaf0"/><rect x="11" y="3.8" width="3.1" height="8.2" fill="#0dcaf0"/><rect x="0" y="6.6" width="14.1" height="2.9" fill="#0dcaf0"/><circle cx="12.4" cy="5.4" r="0.6" fill="#2b3035"/><rect x="3.3" y="10" width="1.3" height="3.8" rx="0.5" fill="#0dcaf0"/><rect x="5.300000000000001" y="10" width="1.3" height="3.8" rx="0.5" fill="#0dcaf0"/><rect x="7.4" y="10" width="1.3" height="3.8" rx="0.5" fill="#0dcaf0"/><rect x="9.4" y="10" width="1.3" height="3.8" rx="0.5" fill="#0dcaf0"/></svg>
<svg style="position:absolute;left:576px;top:499px" width="15" height="15" viewBox="0 0 15 15"><circle cx="7" cy="7" r="7.1" fill="#dc3545"/><rect x="3" y="6.1" width="8" height="1.8" fill="#212529"/></svg>
<div style="position:absolute;left:35.00px;top:546px;width:95.60px;height:1px;background:#0dcaf0"></div>
<div style="position:absolute;left:182.50px;top:546px;width:59.00px;height:1px;background:#0dcaf0"></div>
<div style="position:absolute;left:266.00px;top:546px;width:74.00px;height:1px;background:#0dcaf0"></div>
<div style="position:absolute;left:364.00px;top:546px;width:55.00px;height:1px;background:#0dcaf0"></div>
<div style="position:absolute;left:443.30px;top:546px;width:48.20px;height:1px;background:#0dcaf0"></div>
<div style="position:absolute;left:515.30px;top:546px;width:51.70px;height:1px;background:#0dcaf0"></div>
<div style="position:absolute;left:591.00px;top:546px;width:41.80px;height:1px;background:#0dcaf0"></div>
<div style="position:absolute;left:864.00px;top:545px;width:76.50px;height:1px;background:#0dcaf0"></div>
<div style="position:absolute;left:11px;top:531px;width:16px;height:16px;box-sizing:border-box;border:1px solid #8e9399;border-radius:4px;background:#2e3238"></div>
<svg style="position:absolute;left:139px;top:532.7px" width="14" height="14" viewBox="0 0 14 14"><polygon points="6.75,0.70 8.34,4.82 12.74,5.05 9.32,7.83 10.45,12.10 6.75,9.70 3.05,12.10 4.18,7.83 0.76,5.05 5.16,4.82" fill="none" stroke="#0dcaf0" stroke-width="1.3" stroke-linejoin="miter"/></svg>
<svg style="position:absolute;left:168px;top:532px" width="14" height="14" viewBox="0 0 14 14"><rect x="0" y="0" width="14" height="14" fill="#0dcaf0"/><rect x="1" y="5" width="3" height="2" fill="#343a40"/><rect x="1" y="8" width="3" height="2" fill="#343a40"/><rect x="1" y="11" width="3" height="2" fill="#343a40"/><rect x="5" y="1" width="4" height="3" fill="#343a40"/><rect x="5" y="5" width="4" height="2" fill="#343a40"/><rect x="5" y="8" width="4" height="2" fill="#343a40"/><rect x="5" y="11" width="4" height="2" fill="#343a40"/><rect x="10" y="1" width="3" height="3" fill="#343a40"/><rect x="10" y="5" width="3" height="2" fill="#343a40"/><rect x="10" y="8" width="3" height="2" fill="#343a40"/><rect x="10" y="11" width="3" height="2" fill="#343a40"/></svg>
<svg style="position:absolute;left:251px;top:532px" width="16" height="16" viewBox="0 0 16 16"><rect x="0" y="0" width="14.3" height="3" fill="#0dcaf0"/><rect x="0" y="0" width="1.5" height="13.6" fill="#0dcaf0"/><rect x="0" y="12.7" width="7" height="0.9" fill="#0dcaf0"/><rect x="12.8" y="0" width="1.5" height="6.6" fill="#0dcaf0"/><rect x="1.8" y="3.9" width="2.2" height="2.1" fill="#0dcaf0"/><rect x="5" y="3.9" width="3" height="2.1" fill="#0dcaf0"/><rect x="9" y="3.9" width="3" height="2.1" fill="#0dcaf0"/><rect x="1.8" y="7" width="2.2" height="2" fill="#0dcaf0"/><rect x="5" y="7" width="3" height="2" fill="#0dcaf0"/><rect x="1.8" y="9.9" width="2.2" height="2.1" fill="#0dcaf0"/><rect x="5" y="9.9" width="1.2" height="2.1" fill="#0dcaf0"/><circle cx="11.1" cy="11" r="4.7" fill="#343a40"/><circle cx="11.1" cy="11" r="2.81" fill="#0dcaf0"/><rect x="10.28" y="7.10" width="1.64" height="3.90" fill="#0dcaf0" transform="rotate(0 11.1 11)"/><rect x="10.28" y="7.10" width="1.64" height="3.90" fill="#0dcaf0" transform="rotate(45 11.1 11)"/><rect x="10.28" y="7.10" width="1.64" height="3.90" fill="#0dcaf0" transform="rotate(90 11.1 11)"/><rect x="10.28" y="7.10" width="1.64" height="3.90" fill="#0dcaf0" transform="rotate(135 11.1 11)"/><rect x="10.28" y="7.10" width="1.64" height="3.90" fill="#0dcaf0" transform="rotate(180 11.1 11)"/><rect x="10.28" y="7.10" width="1.64" height="3.90" fill="#0dcaf0" transform="rotate(225 11.1 11)"/><rect x="10.28" y="7.10" width="1.64" height="3.90" fill="#0dcaf0" transform="rotate(270 11.1 11)"/><rect x="10.28" y="7.10" width="1.64" height="3.90" fill="#0dcaf0" transform="rotate(315 11.1 11)"/><circle cx="11.1" cy="11" r="1.09" fill="#343a40"/></svg>
<svg style="position:absolute;left:348px;top:532px" width="15" height="15" viewBox="0 0 15 15"><circle cx="6" cy="4.8" r="3.9" fill="none" stroke="#0dcaf0" stroke-width="1.9"/><path d="M8.9 7.8L14.3 13.2" stroke="#0dcaf0" stroke-width="2.1"/><rect x="0.9" y="10.9" width="2" height="2.9" fill="#0dcaf0"/><rect x="4" y="10.9" width="2" height="2.9" fill="#0dcaf0"/><rect x="7" y="10.9" width="1.9" height="2.9" fill="#0dcaf0"/></svg>
<svg style="position:absolute;left:428px;top:532px" width="16" height="16" viewBox="0 0 16 16"><rect x="2" y="1" width="10" height="4" fill="#0dcaf0"/><rect x="0" y="6" width="14" height="1.9" fill="#0dcaf0"/><rect x="2" y="9" width="10" height="4" fill="#0dcaf0"/><rect x="3.3" y="2.4" width="1.3" height="1.3" fill="#343a40"/><rect x="6.3" y="2.4" width="1.3" height="1.3" fill="#343a40"/><rect x="9.3" y="2.4" width="1.3" height="1.3" fill="#343a40"/><rect x="3.3" y="10.4" width="1.3" height="1.3" fill="#343a40"/><rect x="6.3" y="10.4" width="1.3" height="1.3" fill="#343a40"/><circle cx="11.4" cy="11.4" r="4.4" fill="#343a40"/><circle cx="11.4" cy="11.4" r="3.5" fill="#0dcaf0"/><path d="M9.2 11.4H13.6M11.4 9.2V13.6" stroke="#343a40" stroke-width="0.9"/></svg>
<svg style="position:absolute;left:500px;top:532px" width="15" height="15" viewBox="0 0 15 15"><path d="M3.1 -0.2H7.8V2.8H10.1V5.8H3.1Z" fill="#0dcaf0"/><path d="M8.7 0.2L10.1 1.8H8.7Z" fill="#0dcaf0"/><rect x="0" y="3.8" width="2.2" height="8.2" fill="#0dcaf0"/><rect x="11" y="3.8" width="3.1" height="8.2" fill="#0dcaf0"/><rect x="0" y="6.6" width="14.1" height="2.9" fill="#0dcaf0"/><circle cx="12.4" cy="5.4" r="0.6" fill="#343a40"/><rect x="3.3" y="10" width="1.3" height="3.8" rx="0.5" fill="#0dcaf0"/><rect x="5.300000000000001" y="10" width="1.3" height="3.8" rx="0.5" fill="#0dcaf0"/><rect x="7.4" y="10" width="1.3" height="3.8" rx="0.5" fill="#0dcaf0"/><rect x="9.4" y="10" width="1.3" height="3.8" rx="0.5" fill="#0dcaf0"/></svg>
<svg style="position:absolute;left:576px;top:532px" width="15" height="15" viewBox="0 0 15 15"><circle cx="7" cy="7" r="7.1" fill="#dc3545"/><rect x="3" y="6.1" width="8" height="1.8" fill="#212529"/></svg>
<div style="position:absolute;left:35.00px;top:579px;width:57.50px;height:1px;background:#0dcaf0"></div>
<div style="position:absolute;left:182.50px;top:579px;width:59.00px;height:1px;background:#0dcaf0"></div>
<div style="position:absolute;left:266.00px;top:579px;width:74.00px;height:1px;background:#0dcaf0"></div>
<div style="position:absolute;left:364.00px;top:579px;width:55.00px;height:1px;background:#0dcaf0"></div>
<div style="position:absolute;left:443.30px;top:579px;width:48.20px;height:1px;background:#0dcaf0"></div>
<div style="position:absolute;left:515.30px;top:579px;width:51.70px;height:1px;background:#0dcaf0"></div>
<div style="position:absolute;left:591.00px;top:579px;width:41.80px;height:1px;background:#0dcaf0"></div>
<div style="position:absolute;left:864.00px;top:578px;width:76.50px;height:1px;background:#0dcaf0"></div>
<div style="position:absolute;left:11px;top:564px;width:16px;height:16px;box-sizing:border-box;border:1px solid #8e9399;border-radius:4px;background:#2e3238"></div>
<svg style="position:absolute;left:139px;top:565.7px" width="14" height="14" viewBox="0 0 14 14"><polygon points="6.75,0.70 8.34,4.82 12.74,5.05 9.32,7.83 10.45,12.10 6.75,9.70 3.05,12.10 4.18,7.83 0.76,5.05 5.16,4.82" fill="none" stroke="#0dcaf0" stroke-width="1.3" stroke-linejoin="miter"/></svg>
<svg style="position:absolute;left:168px;top:565px" width="14" height="14" viewBox="0 0 14 14"><rect x="0" y="0" width="14" height="14" fill="#0dcaf0"/><rect x="1" y="5" width="3" height="2" fill="#2b3035"/><rect x="1" y="8" width="3" height="2" fill="#2b3035"/><rect x="1" y="11" width="3" height="2" fill="#2b3035"/><rect x="5" y="1" width="4" height="3" fill="#2b3035"/><rect x="5" y="5" width="4" height="2" fill="#2b3035"/><rect x="5" y="8" width="4" height="2" fill="#2b3035"/><rect x="5" y="11" width="4" height="2" fill="#2b3035"/><rect x="10" y="1" width="3" height="3" fill="#2b3035"/><rect x="10" y="5" width="3" height="2" fill="#2b3035"/><rect x="10" y="8" width="3" height="2" fill="#2b3035"/><rect x="10" y="11" width="3" height="2" fill="#2b3035"/></svg>
<svg style="position:absolute;left:251px;top:565px" width="16" height="16" viewBox="0 0 16 16"><rect x="0" y="0" width="14.3" height="3" fill="#0dcaf0"/><rect x="0" y="0" width="1.5" height="13.6" fill="#0dcaf0"/><rect x="0" y="12.7" width="7" height="0.9" fill="#0dcaf0"/><rect x="12.8" y="0" width="1.5" height="6.6" fill="#0dcaf0"/><rect x="1.8" y="3.9" width="2.2" height="2.1" fill="#0dcaf0"/><rect x="5" y="3.9" width="3" height="2.1" fill="#0dcaf0"/><rect x="9" y="3.9" width="3" height="2.1" fill="#0dcaf0"/><rect x="1.8" y="7" width="2.2" height="2" fill="#0dcaf0"/><rect x="5" y="7" width="3" height="2" fill="#0dcaf0"/><rect x="1.8" y="9.9" width="2.2" height="2.1" fill="#0dcaf0"/><rect x="5" y="9.9" width="1.2" height="2.1" fill="#0dcaf0"/><circle cx="11.1" cy="11" r="4.7" fill="#2b3035"/><circle cx="11.1" cy="11" r="2.81" fill="#0dcaf0"/><rect x="10.28" y="7.10" width="1.64" height="3.90" fill="#0dcaf0" transform="rotate(0 11.1 11)"/><rect x="10.28" y="7.10" width="1.64" height="3.90" fill="#0dcaf0" transform="rotate(45 11.1 11)"/><rect x="10.28" y="7.10" width="1.64" height="3.90" fill="#0dcaf0" transform="rotate(90 11.1 11)"/><rect x="10.28" y="7.10" width="1.64" height="3.90" fill="#0dcaf0" transform="rotate(135 11.1 11)"/><rect x="10.28" y="7.10" width="1.64" height="3.90" fill="#0dcaf0" transform="rotate(180 11.1 11)"/><rect x="10.28" y="7.10" width="1.64" height="3.90" fill="#0dcaf0" transform="rotate(225 11.1 11)"/><rect x="10.28" y="7.10" width="1.64" height="3.90" fill="#0dcaf0" transform="rotate(270 11.1 11)"/><rect x="10.28" y="7.10" width="1.64" height="3.90" fill="#0dcaf0" transform="rotate(315 11.1 11)"/><circle cx="11.1" cy="11" r="1.09" fill="#2b3035"/></svg>
<svg style="position:absolute;left:348px;top:565px" width="15" height="15" viewBox="0 0 15 15"><circle cx="6" cy="4.8" r="3.9" fill="none" stroke="#0dcaf0" stroke-width="1.9"/><path d="M8.9 7.8L14.3 13.2" stroke="#0dcaf0" stroke-width="2.1"/><rect x="0.9" y="10.9" width="2" height="2.9" fill="#0dcaf0"/><rect x="4" y="10.9" width="2" height="2.9" fill="#0dcaf0"/><rect x="7" y="10.9" width="1.9" height="2.9" fill="#0dcaf0"/></svg>
<svg style="position:absolute;left:428px;top:565px" width="16" height="16" viewBox="0 0 16 16"><rect x="2" y="1" width="10" height="4" fill="#0dcaf0"/><rect x="0" y="6" width="14" height="1.9" fill="#0dcaf0"/><rect x="2" y="9" width="10" height="4" fill="#0dcaf0"/><rect x="3.3" y="2.4" width="1.3" height="1.3" fill="#2b3035"/><rect x="6.3" y="2.4" width="1.3" height="1.3" fill="#2b3035"/><rect x="9.3" y="2.4" width="1.3" height="1.3" fill="#2b3035"/><rect x="3.3" y="10.4" width="1.3" height="1.3" fill="#2b3035"/><rect x="6.3" y="10.4" width="1.3" height="1.3" fill="#2b3035"/><circle cx="11.4" cy="11.4" r="4.4" fill="#2b3035"/><circle cx="11.4" cy="11.4" r="3.5" fill="#0dcaf0"/><path d="M9.2 11.4H13.6M11.4 9.2V13.6" stroke="#2b3035" stroke-width="0.9"/></svg>
<svg style="position:absolute;left:500px;top:565px" width="15" height="15" viewBox="0 0 15 15"><path d="M3.1 -0.2H7.8V2.8H10.1V5.8H3.1Z" fill="#0dcaf0"/><path d="M8.7 0.2L10.1 1.8H8.7Z" fill="#0dcaf0"/><rect x="0" y="3.8" width="2.2" height="8.2" fill="#0dcaf0"/><rect x="11" y="3.8" width="3.1" height="8.2" fill="#0dcaf0"/><rect x="0" y="6.6" width="14.1" height="2.9" fill="#0dcaf0"/><circle cx="12.4" cy="5.4" r="0.6" fill="#2b3035"/><rect x="3.3" y="10" width="1.3" height="3.8" rx="0.5" fill="#0dcaf0"/><rect x="5.300000000000001" y="10" width="1.3" height="3.8" rx="0.5" fill="#0dcaf0"/><rect x="7.4" y="10" width="1.3" height="3.8" rx="0.5" fill="#0dcaf0"/><rect x="9.4" y="10" width="1.3" height="3.8" rx="0.5" fill="#0dcaf0"/></svg>
<svg style="position:absolute;left:576px;top:565px" width="15" height="15" viewBox="0 0 15 15"><circle cx="7" cy="7" r="7.1" fill="#dc3545"/><rect x="3" y="6.1" width="8" height="1.8" fill="#212529"/></svg>
<div style="position:absolute;left:64px;top:670px;width:16px;height:16px;box-sizing:border-box;border:1px solid #8e9399;border-radius:4px;background:#2e3238"></div>
<span style="position:absolute;left:67.70px;top:12px;font:16px 'Liberation Sans',sans-serif;line-height:20px;white-space:pre;color:#dee2e6;letter-spacing:0.348px;-webkit-text-stroke:0.2px currentColor">Server: shinobi-academy-database</span>
<span style="position:absolute;left:335.30px;top:12px;font:16px 'Liberation Sans',sans-serif;line-height:20px;white-space:pre;color:#6c757d;letter-spacing:0.000px;-webkit-text-stroke:0.2px currentColor">/</span>
<span style="position:absolute;left:368.80px;top:12px;font:16px 'Liberation Sans',sans-serif;line-height:20px;white-space:pre;color:#dee2e6;letter-spacing:0.562px;-webkit-text-stroke:0.2px currentColor">Database: monacomotors</span>
<span style="position:absolute;left:27.75px;top:60px;font:16px 'Liberation Sans',sans-serif;line-height:20px;white-space:pre;color:#000;letter-spacing:0.656px;-webkit-text-stroke:0.2px currentColor">Structure</span>
<span style="position:absolute;left:133.00px;top:60px;font:16px 'Liberation Sans',sans-serif;line-height:20px;white-space:pre;color:#dee2e6;letter-spacing:-1.000px;-webkit-text-stroke:0.2px currentColor">SQL</span>
<span style="position:absolute;left:199.00px;top:60px;font:16px 'Liberation Sans',sans-serif;line-height:20px;white-space:pre;color:#dee2e6;letter-spacing:0.000px;-webkit-text-stroke:0.2px currentColor">Search</span>
<span style="position:absolute;left:286.50px;top:60px;font:16px 'Liberation Sans',sans-serif;line-height:20px;white-space:pre;color:#dee2e6;letter-spacing:0.500px;-webkit-text-stroke:0.2px currentColor">Query</span>
<span style="position:absolute;left:368.50px;top:60px;font:16px 'Liberation Sans',sans-serif;line-height:20px;white-space:pre;color:#dee2e6;letter-spacing:0.700px;-webkit-text-stroke:0.2px currentColor">Export</span>
<span style="position:absolute;left:453.50px;top:60px;font:16px 'Liberation Sans',sans-serif;line-height:20px;white-space:pre;color:#dee2e6;letter-spacing:1.500px;-webkit-text-stroke:0.2px currentColor">Import</span>
<span style="position:absolute;left:542.75px;top:60px;font:16px 'Liberation Sans',sans-serif;line-height:20px;white-space:pre;color:#dee2e6;letter-spacing:0.583px;-webkit-text-stroke:0.2px currentColor">Operations</span>
<span style="position:absolute;left:662.00px;top:60px;font:16px 'Liberation Sans',sans-serif;line-height:20px;white-space:pre;color:#dee2e6;letter-spacing:0.389px;-webkit-text-stroke:0.2px currentColor">Privileges</span>
<span style="position:absolute;left:770.75px;top:60px;font:16px 'Liberation Sans',sans-serif;line-height:20px;white-space:pre;color:#dee2e6;letter-spacing:0.429px;-webkit-text-stroke:0.2px currentColor">Routines</span>
<span style="position:absolute;left:873.25px;top:60px;font:16px 'Liberation Sans',sans-serif;line-height:20px;white-space:pre;color:#dee2e6;letter-spacing:0.464px;-webkit-text-stroke:0.2px currentColor">Designer</span>
<span style="position:absolute;left:23.50px;top:117px;font:16px 'Liberation Sans',sans-serif;line-height:20px;white-space:pre;color:#dee2e6;letter-spacing:0.417px;-webkit-text-stroke:0.2px currentColor">Filters</span>
<span style="position:absolute;left:23.50px;top:173px;font:16px 'Liberation Sans',sans-serif;line-height:20px;white-space:pre;color:#dee2e6;letter-spacing:0.671px;-webkit-text-stroke:0.2px currentColor">Containing the word:</span>
<span style="position:absolute;left:35.20px;top:265px;font:bold 16px 'Liberation Sans',sans-serif;line-height:20px;white-space:pre;color:#0dcaf0;letter-spacing:0.350px;">Table</span>
<span style="position:absolute;left:139.00px;top:265px;font:bold 16px 'Liberation Sans',sans-serif;line-height:20px;white-space:pre;color:#fff;letter-spacing:0.320px;">Action</span>
<span style="position:absolute;left:640.50px;top:241px;font:bold 16px 'Liberation Sans',sans-serif;line-height:20px;white-space:pre;color:#0dcaf0;letter-spacing:-0.167px;">Rows</span>
<span style="position:absolute;left:710.30px;top:265px;font:bold 16px 'Liberation Sans',sans-serif;line-height:20px;white-space:pre;color:#0dcaf0;letter-spacing:0.233px;">Type</span>
<span style="position:absolute;left:774.20px;top:265px;font:bold 16px 'Liberation Sans',sans-serif;line-height:20px;white-space:pre;color:#0dcaf0;letter-spacing:0.587px;">Collation</span>
<span style="position:absolute;left:853.90px;top:265px;font:bold 16px 'Liberation Sans',sans-serif;line-height:20px;white-space:pre;color:#0dcaf0;letter-spacing:-0.067px;">Size</span>
<span style="position:absolute;left:948.20px;top:265px;font:bold 16px 'Liberation Sans',sans-serif;line-height:20px;white-space:pre;color:#0dcaf0;letter-spacing:0.814px;">Overhead</span>
<span style="position:absolute;left:34.20px;top:298px;font:bold 16px 'Liberation Sans',sans-serif;line-height:20px;white-space:pre;color:#0dcaf0;letter-spacing:0.543px;">Customer</span>
<span style="position:absolute;left:186.00px;top:298px;font:16px 'Liberation Sans',sans-serif;line-height:20px;white-space:pre;color:#0dcaf0;letter-spacing:0.400px;-webkit-text-stroke:0.2px currentColor">Browse</span>
<span style="position:absolute;left:269.80px;top:298px;font:16px 'Liberation Sans',sans-serif;line-height:20px;white-space:pre;color:#0dcaf0;letter-spacing:0.737px;-webkit-text-stroke:0.2px currentColor">Structure</span>
<span style="position:absolute;left:367.60px;top:298px;font:16px 'Liberation Sans',sans-serif;line-height:20px;white-space:pre;color:#0dcaf0;letter-spacing:0.200px;-webkit-text-stroke:0.2px currentColor">Search</span>
<span style="position:absolute;left:447.20px;top:298px;font:16px 'Liberation Sans',sans-serif;line-height:20px;white-space:pre;color:#0dcaf0;letter-spacing:0.760px;-webkit-text-stroke:0.2px currentColor">Insert</span>
<span style="position:absolute;left:519.60px;top:298px;font:16px 'Liberation Sans',sans-serif;line-height:20px;white-space:pre;color:#0dcaf0;letter-spacing:0.525px;-webkit-text-stroke:0.2px currentColor">Empty</span>
<span style="position:absolute;left:595.40px;top:298px;font:16px 'Liberation Sans',sans-serif;line-height:20px;white-space:pre;color:#0dcaf0;letter-spacing:1.000px;-webkit-text-stroke:0.2px currentColor">Drop</span>
<span style="position:absolute;left:682.50px;top:298px;font:16px 'Liberation Mono',monospace;line-height:20px;white-space:pre;color:#dee2e6;letter-spacing:0.000px;">13</span>
<span style="position:absolute;left:709.40px;top:299px;font:16px 'Liberation Sans',sans-serif;line-height:20px;white-space:pre;color:#dee2e6;letter-spacing:0.760px;-webkit-text-stroke:0.2px currentColor">InnoDB</span>
<span style="position:absolute;left:774.00px;top:297px;font:16px 'Liberation Sans',sans-serif;line-height:20px;white-space:pre;color:#dee2e6;letter-spacing:0.000px;-webkit-text-stroke:0.2px currentColor">---</span>
<span style="position:absolute;left:863.20px;top:297px;font:16px 'Liberation Mono',monospace;line-height:20px;white-space:pre;color:#0dcaf0;letter-spacing:0.114px;">32.0 KiB</span>
<span style="position:absolute;left:1019.00px;top:297px;font:16px 'Liberation Sans',sans-serif;line-height:20px;white-space:pre;color:#dee2e6;letter-spacing:0.000px;-webkit-text-stroke:0.2px currentColor">-</span>
<span style="position:absolute;left:34.20px;top:331px;font:bold 16px 'Liberation Sans',sans-serif;line-height:20px;white-space:pre;color:#0dcaf0;letter-spacing:1.067px;">Deal</span>
<span style="position:absolute;left:186.00px;top:331px;font:16px 'Liberation Sans',sans-serif;line-height:20px;white-space:pre;color:#0dcaf0;letter-spacing:0.400px;-webkit-text-stroke:0.2px currentColor">Browse</span>
<span style="position:absolute;left:269.80px;top:331px;font:16px 'Liberation Sans',sans-serif;line-height:20px;white-space:pre;color:#0dcaf0;letter-spacing:0.737px;-webkit-text-stroke:0.2px currentColor">Structure</span>
<span style="position:absolute;left:367.60px;top:331px;font:16px 'Liberation Sans',sans-serif;line-height:20px;white-space:pre;color:#0dcaf0;letter-spacing:0.200px;-webkit-text-stroke:0.2px currentColor">Search</span>
<span style="position:absolute;left:447.20px;top:331px;font:16px 'Liberation Sans',sans-serif;line-height:20px;white-space:pre;color:#0dcaf0;letter-spacing:0.760px;-webkit-text-stroke:0.2px currentColor">Insert</span>
<span style="position:absolute;left:519.60px;top:331px;font:16px 'Liberation Sans',sans-serif;line-height:20px;white-space:pre;color:#0dcaf0;letter-spacing:0.525px;-webkit-text-stroke:0.2px currentColor">Empty</span>
<span style="position:absolute;left:595.40px;top:331px;font:16px 'Liberation Sans',sans-serif;line-height:20px;white-space:pre;color:#0dcaf0;letter-spacing:1.000px;-webkit-text-stroke:0.2px currentColor">Drop</span>
<span style="position:absolute;left:682.50px;top:331px;font:16px 'Liberation Mono',monospace;line-height:20px;white-space:pre;color:#dee2e6;letter-spacing:0.000px;">10</span>
<span style="position:absolute;left:709.40px;top:331px;font:16px 'Liberation Sans',sans-serif;line-height:20px;white-space:pre;color:#dee2e6;letter-spacing:0.760px;-webkit-text-stroke:0.2px currentColor">InnoDB</span>
<span style="position:absolute;left:774.00px;top:329px;font:16px 'Liberation Sans',sans-serif;line-height:20px;white-space:pre;color:#dee2e6;letter-spacing:0.000px;-webkit-text-stroke:0.2px currentColor">---</span>
<span style="position:absolute;left:863.20px;top:330px;font:16px 'Liberation Mono',monospace;line-height:20px;white-space:pre;color:#0dcaf0;letter-spacing:0.114px;">80.0 KiB</span>
<span style="position:absolute;left:1019.00px;top:329px;font:16px 'Liberation Sans',sans-serif;line-height:20px;white-space:pre;color:#dee2e6;letter-spacing:0.000px;-webkit-text-stroke:0.2px currentColor">-</span>
<span style="position:absolute;left:34.20px;top:364px;font:bold 16px 'Liberation Sans',sans-serif;line-height:20px;white-space:pre;color:#0dcaf0;letter-spacing:0.578px;">Dealership</span>
<span style="position:absolute;left:186.00px;top:364px;font:16px 'Liberation Sans',sans-serif;line-height:20px;white-space:pre;color:#0dcaf0;letter-spacing:0.400px;-webkit-text-stroke:0.2px currentColor">Browse</span>
<span style="position:absolute;left:269.80px;top:364px;font:16px 'Liberation Sans',sans-serif;line-height:20px;white-space:pre;color:#0dcaf0;letter-spacing:0.737px;-webkit-text-stroke:0.2px currentColor">Structure</span>
<span style="position:absolute;left:367.60px;top:364px;font:16px 'Liberation Sans',sans-serif;line-height:20px;white-space:pre;color:#0dcaf0;letter-spacing:0.200px;-webkit-text-stroke:0.2px currentColor">Search</span>
<span style="position:absolute;left:447.20px;top:364px;font:16px 'Liberation Sans',sans-serif;line-height:20px;white-space:pre;color:#0dcaf0;letter-spacing:0.760px;-webkit-text-stroke:0.2px currentColor">Insert</span>
<span style="position:absolute;left:519.60px;top:364px;font:16px 'Liberation Sans',sans-serif;line-height:20px;white-space:pre;color:#0dcaf0;letter-spacing:0.525px;-webkit-text-stroke:0.2px currentColor">Empty</span>
<span style="position:absolute;left:595.40px;top:364px;font:16px 'Liberation Sans',sans-serif;line-height:20px;white-space:pre;color:#0dcaf0;letter-spacing:1.000px;-webkit-text-stroke:0.2px currentColor">Drop</span>
<span style="position:absolute;left:692.10px;top:364px;font:16px 'Liberation Mono',monospace;line-height:20px;white-space:pre;color:#dee2e6;letter-spacing:0.000px;">6</span>
<span style="position:absolute;left:709.40px;top:365px;font:16px 'Liberation Sans',sans-serif;line-height:20px;white-space:pre;color:#dee2e6;letter-spacing:0.760px;-webkit-text-stroke:0.2px currentColor">InnoDB</span>
<span style="position:absolute;left:774.00px;top:363px;font:16px 'Liberation Sans',sans-serif;line-height:20px;white-space:pre;color:#dee2e6;letter-spacing:0.000px;-webkit-text-stroke:0.2px currentColor">---</span>
<span style="position:absolute;left:863.20px;top:363px;font:16px 'Liberation Mono',monospace;line-height:20px;white-space:pre;color:#0dcaf0;letter-spacing:0.114px;">48.0 KiB</span>
<span style="position:absolute;left:1019.00px;top:363px;font:16px 'Liberation Sans',sans-serif;line-height:20px;white-space:pre;color:#dee2e6;letter-spacing:0.000px;-webkit-text-stroke:0.2px currentColor">-</span>
<span style="position:absolute;left:34.20px;top:397px;font:bold 16px 'Liberation Sans',sans-serif;line-height:20px;white-space:pre;color:#0dcaf0;letter-spacing:0.710px;">Distributor</span>
<span style="position:absolute;left:186.00px;top:397px;font:16px 'Liberation Sans',sans-serif;line-height:20px;white-space:pre;color:#0dcaf0;letter-spacing:0.400px;-webkit-text-stroke:0.2px currentColor">Browse</span>
<span style="position:absolute;left:269.80px;top:397px;font:16px 'Liberation Sans',sans-serif;line-height:20px;white-space:pre;color:#0dcaf0;letter-spacing:0.737px;-webkit-text-stroke:0.2px currentColor">Structure</span>
<span style="position:absolute;left:367.60px;top:397px;font:16px 'Liberation Sans',sans-serif;line-height:20px;white-space:pre;color:#0dcaf0;letter-spacing:0.200px;-webkit-text-stroke:0.2px currentColor">Search</span>
<span style="position:absolute;left:447.20px;top:397px;font:16px 'Liberation Sans',sans-serif;line-height:20px;white-space:pre;color:#0dcaf0;letter-spacing:0.760px;-webkit-text-stroke:0.2px currentColor">Insert</span>
<span style="position:absolute;left:519.60px;top:397px;font:16px 'Liberation Sans',sans-serif;line-height:20px;white-space:pre;color:#0dcaf0;letter-spacing:0.525px;-webkit-text-stroke:0.2px currentColor">Empty</span>
<span style="position:absolute;left:595.40px;top:397px;font:16px 'Liberation Sans',sans-serif;line-height:20px;white-space:pre;color:#0dcaf0;letter-spacing:1.000px;-webkit-text-stroke:0.2px currentColor">Drop</span>
<span style="position:absolute;left:692.10px;top:397px;font:16px 'Liberation Mono',monospace;line-height:20px;white-space:pre;color:#dee2e6;letter-spacing:0.000px;">6</span>
<span style="position:absolute;left:709.40px;top:397px;font:16px 'Liberation Sans',sans-serif;line-height:20px;white-space:pre;color:#dee2e6;letter-spacing:0.760px;-webkit-text-stroke:0.2px currentColor">InnoDB</span>
<span style="position:absolute;left:774.00px;top:395px;font:16px 'Liberation Sans',sans-serif;line-height:20px;white-space:pre;color:#dee2e6;letter-spacing:0.000px;-webkit-text-stroke:0.2px currentColor">---</span>
<span style="position:absolute;left:863.20px;top:396px;font:16px 'Liberation Mono',monospace;line-height:20px;white-space:pre;color:#0dcaf0;letter-spacing:0.114px;">16.0 KiB</span>
<span style="position:absolute;left:1019.00px;top:395px;font:16px 'Liberation Sans',sans-serif;line-height:20px;white-space:pre;color:#dee2e6;letter-spacing:0.000px;-webkit-text-stroke:0.2px currentColor">-</span>
<span style="position:absolute;left:34.20px;top:430px;font:bold 16px 'Liberation Sans',sans-serif;line-height:20px;white-space:pre;color:#0dcaf0;letter-spacing:0.662px;">Insurance</span>
<span style="position:absolute;left:186.00px;top:430px;font:16px 'Liberation Sans',sans-serif;line-height:20px;white-space:pre;color:#0dcaf0;letter-spacing:0.400px;-webkit-text-stroke:0.2px currentColor">Browse</span>
<span style="position:absolute;left:269.80px;top:430px;font:16px 'Liberation Sans',sans-serif;line-height:20px;white-space:pre;color:#0dcaf0;letter-spacing:0.737px;-webkit-text-stroke:0.2px currentColor">Structure</span>
<span style="position:absolute;left:367.60px;top:430px;font:16px 'Liberation Sans',sans-serif;line-height:20px;white-space:pre;color:#0dcaf0;letter-spacing:0.200px;-webkit-text-stroke:0.2px currentColor">Search</span>
<span style="position:absolute;left:447.20px;top:430px;font:16px 'Liberation Sans',sans-serif;line-height:20px;white-space:pre;color:#0dcaf0;letter-spacing:0.760px;-webkit-text-stroke:0.2px currentColor">Insert</span>
<span style="position:absolute;left:519.60px;top:430px;font:16px 'Liberation Sans',sans-serif;line-height:20px;white-space:pre;color:#0dcaf0;letter-spacing:0.525px;-webkit-text-stroke:0.2px currentColor">Empty</span>
<span style="position:absolute;left:595.40px;top:430px;font:16px 'Liberation Sans',sans-serif;line-height:20px;white-space:pre;color:#0dcaf0;letter-spacing:1.000px;-webkit-text-stroke:0.2px currentColor">Drop</span>
<span style="position:absolute;left:692.10px;top:430px;font:16px 'Liberation Mono',monospace;line-height:20px;white-space:pre;color:#dee2e6;letter-spacing:0.000px;">7</span>
<span style="position:absolute;left:709.40px;top:431px;font:16px 'Liberation Sans',sans-serif;line-height:20px;white-space:pre;color:#dee2e6;letter-spacing:0.760px;-webkit-text-stroke:0.2px currentColor">InnoDB</span>
<span style="position:absolute;left:774.00px;top:429px;font:16px 'Liberation Sans',sans-serif;line-height:20px;white-space:pre;color:#dee2e6;letter-spacing:0.000px;-webkit-text-stroke:0.2px currentColor">---</span>
<span style="position:absolute;left:863.20px;top:429px;font:16px 'Liberation Mono',monospace;line-height:20px;white-space:pre;color:#0dcaf0;letter-spacing:0.114px;">16.0 KiB</span>
<span style="position:absolute;left:1019.00px;top:429px;font:16px 'Liberation Sans',sans-serif;line-height:20px;white-space:pre;color:#dee2e6;letter-spacing:0.000px;-webkit-text-stroke:0.2px currentColor">-</span>
<span style="position:absolute;left:34.20px;top:463px;font:bold 16px 'Liberation Sans',sans-serif;line-height:20px;white-space:pre;color:#0dcaf0;letter-spacing:1.083px;">Manager</span>
<span style="position:absolute;left:186.00px;top:463px;font:16px 'Liberation Sans',sans-serif;line-height:20px;white-space:pre;color:#0dcaf0;letter-spacing:0.400px;-webkit-text-stroke:0.2px currentColor">Browse</span>
<span style="position:absolute;left:269.80px;top:463px;font:16px 'Liberation Sans',sans-serif;line-height:20px;white-space:pre;color:#0dcaf0;letter-spacing:0.737px;-webkit-text-stroke:0.2px currentColor">Structure</span>
<span style="position:absolute;left:367.60px;top:463px;font:16px 'Liberation Sans',sans-serif;line-height:20px;white-space:pre;color:#0dcaf0;letter-spacing:0.200px;-webkit-text-stroke:0.2px currentColor">Search</span>
<span style="position:absolute;left:447.20px;top:463px;font:16px 'Liberation Sans',sans-serif;line-height:20px;white-space:pre;color:#0dcaf0;letter-spacing:0.760px;-webkit-text-stroke:0.2px currentColor">Insert</span>
<span style="position:absolute;left:519.60px;top:463px;font:16px 'Liberation Sans',sans-serif;line-height:20px;white-space:pre;color:#0dcaf0;letter-spacing:0.525px;-webkit-text-stroke:0.2px currentColor">Empty</span>
<span style="position:absolute;left:595.40px;top:463px;font:16px 'Liberation Sans',sans-serif;line-height:20px;white-space:pre;color:#0dcaf0;letter-spacing:1.000px;-webkit-text-stroke:0.2px currentColor">Drop</span>
<span style="position:absolute;left:692.10px;top:463px;font:16px 'Liberation Mono',monospace;line-height:20px;white-space:pre;color:#dee2e6;letter-spacing:0.000px;">6</span>
<span style="position:absolute;left:709.40px;top:463px;font:16px 'Liberation Sans',sans-serif;line-height:20px;white-space:pre;color:#dee2e6;letter-spacing:0.760px;-webkit-text-stroke:0.2px currentColor">InnoDB</span>
<span style="position:absolute;left:774.00px;top:461px;font:16px 'Liberation Sans',sans-serif;line-height:20px;white-space:pre;color:#dee2e6;letter-spacing:0.000px;-webkit-text-stroke:0.2px currentColor">---</span>
<span style="position:absolute;left:863.20px;top:462px;font:16px 'Liberation Mono',monospace;line-height:20px;white-space:pre;color:#0dcaf0;letter-spacing:0.114px;">48.0 KiB</span>
<span style="position:absolute;left:1019.00px;top:461px;font:16px 'Liberation Sans',sans-serif;line-height:20px;white-space:pre;color:#dee2e6;letter-spacing:0.000px;-webkit-text-stroke:0.2px currentColor">-</span>
<span style="position:absolute;left:34.20px;top:496px;font:bold 16px 'Liberation Sans',sans-serif;line-height:20px;white-space:pre;color:#0dcaf0;letter-spacing:0.280px;">Region</span>
<span style="position:absolute;left:186.00px;top:496px;font:16px 'Liberation Sans',sans-serif;line-height:20px;white-space:pre;color:#0dcaf0;letter-spacing:0.400px;-webkit-text-stroke:0.2px currentColor">Browse</span>
<span style="position:absolute;left:269.80px;top:496px;font:16px 'Liberation Sans',sans-serif;line-height:20px;white-space:pre;color:#0dcaf0;letter-spacing:0.737px;-webkit-text-stroke:0.2px currentColor">Structure</span>
<span style="position:absolute;left:367.60px;top:496px;font:16px 'Liberation Sans',sans-serif;line-height:20px;white-space:pre;color:#0dcaf0;letter-spacing:0.200px;-webkit-text-stroke:0.2px currentColor">Search</span>
<span style="position:absolute;left:447.20px;top:496px;font:16px 'Liberation Sans',sans-serif;line-height:20px;white-space:pre;color:#0dcaf0;letter-spacing:0.760px;-webkit-text-stroke:0.2px currentColor">Insert</span>
<span style="position:absolute;left:519.60px;top:496px;font:16px 'Liberation Sans',sans-serif;line-height:20px;white-space:pre;color:#0dcaf0;letter-spacing:0.525px;-webkit-text-stroke:0.2px currentColor">Empty</span>
<span style="position:absolute;left:595.40px;top:496px;font:16px 'Liberation Sans',sans-serif;line-height:20px;white-space:pre;color:#0dcaf0;letter-spacing:1.000px;-webkit-text-stroke:0.2px currentColor">Drop</span>
<span style="position:absolute;left:692.10px;top:496px;font:16px 'Liberation Mono',monospace;line-height:20px;white-space:pre;color:#dee2e6;letter-spacing:0.000px;">3</span>
<span style="position:absolute;left:709.40px;top:497px;font:16px 'Liberation Sans',sans-serif;line-height:20px;white-space:pre;color:#dee2e6;letter-spacing:0.760px;-webkit-text-stroke:0.2px currentColor">InnoDB</span>
<span style="position:absolute;left:774.00px;top:495px;font:16px 'Liberation Sans',sans-serif;line-height:20px;white-space:pre;color:#dee2e6;letter-spacing:0.000px;-webkit-text-stroke:0.2px currentColor">---</span>
<span style="position:absolute;left:863.20px;top:495px;font:16px 'Liberation Mono',monospace;line-height:20px;white-space:pre;color:#0dcaf0;letter-spacing:0.114px;">16.0 KiB</span>
<span style="position:absolute;left:1019.00px;top:495px;font:16px 'Liberation Sans',sans-serif;line-height:20px;white-space:pre;color:#dee2e6;letter-spacing:0.000px;-webkit-text-stroke:0.2px currentColor">-</span>
<span style="position:absolute;left:34.20px;top:529px;font:bold 16px 'Liberation Sans',sans-serif;line-height:20px;white-space:pre;color:#0dcaf0;letter-spacing:-0.010px;">Sales_Agent</span>
<span style="position:absolute;left:186.00px;top:529px;font:16px 'Liberation Sans',sans-serif;line-height:20px;white-space:pre;color:#0dcaf0;letter-spacing:0.400px;-webkit-text-stroke:0.2px currentColor">Browse</span>
<span style="position:absolute;left:269.80px;top:529px;font:16px 'Liberation Sans',sans-serif;line-height:20px;white-space:pre;color:#0dcaf0;letter-spacing:0.737px;-webkit-text-stroke:0.2px currentColor">Structure</span>
<span style="position:absolute;left:367.60px;top:529px;font:16px 'Liberation Sans',sans-serif;line-height:20px;white-space:pre;color:#0dcaf0;letter-spacing:0.200px;-webkit-text-stroke:0.2px currentColor">Search</span>
<span style="position:absolute;left:447.20px;top:529px;font:16px 'Liberation Sans',sans-serif;line-height:20px;white-space:pre;color:#0dcaf0;letter-spacing:0.760px;-webkit-text-stroke:0.2px currentColor">Insert</span>
<span style="position:absolute;left:519.60px;top:529px;font:16px 'Liberation Sans',sans-serif;line-height:20px;white-space:pre;color:#0dcaf0;letter-spacing:0.525px;-webkit-text-stroke:0.2px currentColor">Empty</span>
<span style="position:absolute;left:595.40px;top:529px;font:16px 'Liberation Sans',sans-serif;line-height:20px;white-space:pre;color:#0dcaf0;letter-spacing:1.000px;-webkit-text-stroke:0.2px currentColor">Drop</span>
<span style="position:absolute;left:682.50px;top:529px;font:16px 'Liberation Mono',monospace;line-height:20px;white-space:pre;color:#dee2e6;letter-spacing:0.000px;">12</span>
<span style="position:absolute;left:709.40px;top:529px;font:16px 'Liberation Sans',sans-serif;line-height:20px;white-space:pre;color:#dee2e6;letter-spacing:0.760px;-webkit-text-stroke:0.2px currentColor">InnoDB</span>
<span style="position:absolute;left:774.00px;top:527px;font:16px 'Liberation Sans',sans-serif;line-height:20px;white-space:pre;color:#dee2e6;letter-spacing:0.000px;-webkit-text-stroke:0.2px currentColor">---</span>
<span style="position:absolute;left:863.20px;top:528px;font:16px 'Liberation Mono',monospace;line-height:20px;white-space:pre;color:#0dcaf0;letter-spacing:0.114px;">48.0 KiB</span>
<span style="position:absolute;left:1019.00px;top:527px;font:16px 'Liberation Sans',sans-serif;line-height:20px;white-space:pre;color:#dee2e6;letter-spacing:0.000px;-webkit-text-stroke:0.2px currentColor">-</span>
<span style="position:absolute;left:35.20px;top:562px;font:bold 16px 'Liberation Sans',sans-serif;line-height:20px;white-space:pre;color:#0dcaf0;letter-spacing:0.300px;">Vehicle</span>
<span style="position:absolute;left:186.00px;top:562px;font:16px 'Liberation Sans',sans-serif;line-height:20px;white-space:pre;color:#0dcaf0;letter-spacing:0.400px;-webkit-text-stroke:0.2px currentColor">Browse</span>
<span style="position:absolute;left:269.80px;top:562px;font:16px 'Liberation Sans',sans-serif;line-height:20px;white-space:pre;color:#0dcaf0;letter-spacing:0.737px;-webkit-text-stroke:0.2px currentColor">Structure</span>
<span style="position:absolute;left:367.60px;top:562px;font:16px 'Liberation Sans',sans-serif;line-height:20px;white-space:pre;color:#0dcaf0;letter-spacing:0.200px;-webkit-text-stroke:0.2px currentColor">Search</span>
<span style="position:absolute;left:447.20px;top:562px;font:16px 'Liberation Sans',sans-serif;line-height:20px;white-space:pre;color:#0dcaf0;letter-spacing:0.760px;-webkit-text-stroke:0.2px currentColor">Insert</span>
<span style="position:absolute;left:519.60px;top:562px;font:16px 'Liberation Sans',sans-serif;line-height:20px;white-space:pre;color:#0dcaf0;letter-spacing:0.525px;-webkit-text-stroke:0.2px currentColor">Empty</span>
<span style="position:absolute;left:595.40px;top:562px;font:16px 'Liberation Sans',sans-serif;line-height:20px;white-space:pre;color:#0dcaf0;letter-spacing:1.000px;-webkit-text-stroke:0.2px currentColor">Drop</span>
<span style="position:absolute;left:682.50px;top:562px;font:16px 'Liberation Mono',monospace;line-height:20px;white-space:pre;color:#dee2e6;letter-spacing:0.000px;">12</span>
<span style="position:absolute;left:709.40px;top:563px;font:16px 'Liberation Sans',sans-serif;line-height:20px;white-space:pre;color:#dee2e6;letter-spacing:0.760px;-webkit-text-stroke:0.2px currentColor">InnoDB</span>
<span style="position:absolute;left:774.00px;top:561px;font:16px 'Liberation Sans',sans-serif;line-height:20px;white-space:pre;color:#dee2e6;letter-spacing:0.000px;-webkit-text-stroke:0.2px currentColor">---</span>
<span style="position:absolute;left:863.20px;top:561px;font:16px 'Liberation Mono',monospace;line-height:20px;white-space:pre;color:#0dcaf0;letter-spacing:0.114px;">48.0 KiB</span>
<span style="position:absolute;left:1019.00px;top:561px;font:16px 'Liberation Sans',sans-serif;line-height:20px;white-space:pre;color:#dee2e6;letter-spacing:0.000px;-webkit-text-stroke:0.2px currentColor">-</span>
<span style="position:absolute;left:34.20px;top:607px;font:bold 16px 'Liberation Sans',sans-serif;line-height:20px;white-space:pre;color:#fff;letter-spacing:0.571px;">9 tables</span>
<span style="position:absolute;left:138.00px;top:607px;font:bold 16px 'Liberation Sans',sans-serif;line-height:20px;white-space:pre;color:#fff;letter-spacing:0.450px;">Sum</span>
<span style="position:absolute;left:682.50px;top:606px;font:bold 16px 'Liberation Mono',monospace;line-height:20px;white-space:pre;color:#fff;letter-spacing:0.800px;">75</span>
<span style="position:absolute;left:709.75px;top:607px;font:italic bold 16px 'Liberation Mono',monospace;line-height:20px;white-space:pre;color:#fff;letter-spacing:-0.300px;">InnoDB</span>
<span style="position:absolute;left:892.50px;top:595px;font:bold 16px 'Liberation Mono',monospace;line-height:20px;white-space:pre;color:#fff;letter-spacing:0.225px;">352.0</span>
<span style="position:absolute;left:911.40px;top:618px;font:bold 16px 'Liberation Mono',monospace;line-height:20px;white-space:pre;color:#fff;letter-spacing:0.150px;">KiB</span>
<span style="position:absolute;left:998.00px;top:606px;font:bold 16px 'Liberation Mono',monospace;line-height:20px;white-space:pre;color:#fff;letter-spacing:0.100px;">0 B</span>
<span style="position:absolute;left:83.70px;top:671px;font:16px 'Liberation Sans',sans-serif;line-height:20px;white-space:pre;color:#0dcaf0;letter-spacing:0.112px;-webkit-text-stroke:0.2px currentColor">Check all</span>
<span style="position:absolute;left:213.00px;top:671px;font:16px 'Liberation Sans',sans-serif;line-height:20px;white-space:pre;color:#dee2e6;letter-spacing:0.423px;-webkit-text-stroke:0.2px currentColor">With selected:</span>
<svg style="position:absolute;left:13.5px;top:13.5px" width="11" height="16" viewBox="0 0 11 16"><path d="M0.3 7.6L7.9 0.1L10.5 2.6L5.4 7.6L10.5 12.6L7.9 15.1Z" fill="#0dcaf0" stroke="#0dcaf0" stroke-width="0.4" stroke-linejoin="round"/></svg>
<svg style="position:absolute;left:49px;top:15px" width="14" height="14" viewBox="0 0 14 14"><rect x="0" y="0" width="6" height="14" fill="#0dcaf0"/><rect x="1.2" y="1.2" width="3.6" height="0.9" fill="#343a40"/><rect x="1.2" y="3.3" width="3.6" height="0.9" fill="#343a40"/><rect x="1.2" y="5.4" width="3.6" height="0.9" fill="#343a40"/><rect x="2" y="12" width="2" height="0.6" fill="#343a40" opacity="0.5"/><path d="M7 2.6H13.5V11H7" fill="none" stroke="#0dcaf0" stroke-width="1.3"/><rect x="7" y="12.9" width="2.8" height="0.9" fill="#0dcaf0"/></svg>
<svg style="position:absolute;left:351px;top:15px" width="13" height="15" viewBox="0 0 13 15"><path d="M0 3A6.2 3 0 0 1 12.4 3V11A6.2 3.1 0 0 1 0 11Z" fill="#0dcaf0"/><ellipse cx="6.2" cy="2.8" rx="3.9" ry="1.1" fill="#343a40"/><path d="M-0.2 6.3Q6.2 9.6 12.6 6.3" fill="none" stroke="#343a40" stroke-width="0.9"/><path d="M-0.2 10.2Q6.2 13.5 12.6 10.2" fill="none" stroke="#343a40" stroke-width="0.9"/></svg>
<svg style="position:absolute;left:980px;top:11px" width="22" height="22" viewBox="0 0 22 22"><circle cx="11" cy="11" r="8" fill="#0dcaf0"/><rect x="9" y="0" width="4" height="5" rx="1" fill="#0dcaf0" transform="rotate(0 11 11)"/><rect x="9" y="0" width="4" height="5" rx="1" fill="#0dcaf0" transform="rotate(45 11 11)"/><rect x="9" y="0" width="4" height="5" rx="1" fill="#0dcaf0" transform="rotate(90 11 11)"/><rect x="9" y="0" width="4" height="5" rx="1" fill="#0dcaf0" transform="rotate(135 11 11)"/><rect x="9" y="0" width="4" height="5" rx="1" fill="#0dcaf0" transform="rotate(180 11 11)"/><rect x="9" y="0" width="4" height="5" rx="1" fill="#0dcaf0" transform="rotate(225 11 11)"/><rect x="9" y="0" width="4" height="5" rx="1" fill="#0dcaf0" transform="rotate(270 11 11)"/><rect x="9" y="0" width="4" height="5" rx="1" fill="#0dcaf0" transform="rotate(315 11 11)"/><circle cx="11" cy="11" r="4" fill="#212529"/></svg>
<svg style="position:absolute;left:1013px;top:16px" width="12" height="12" viewBox="0 0 12 12"><rect x="0" y="0" width="12" height="3" fill="#0dcaf0"/><path d="M0 8L6 2.5L12 8V12L6 7L0 12Z" fill="#0dcaf0"/></svg>
<svg style="position:absolute;left:9px;top:63px" width="16" height="16" viewBox="0 0 16 16"><rect x="0" y="0" width="13.8" height="2.9" fill="#000"/><rect x="0" y="0" width="1.3" height="13.8" fill="#000"/><rect x="0" y="13" width="6.7" height="0.9" fill="#000"/><rect x="12.5" y="0" width="1.3" height="6.6" fill="#000"/><rect x="1.9" y="3.8" width="2.1" height="2.1" fill="#000"/><rect x="4.9" y="3.8" width="3" height="2.1" fill="#000"/><rect x="8.7" y="3.8" width="3" height="2.1" fill="#000"/><rect x="1.9" y="6.9" width="2.1" height="2" fill="#000"/><rect x="4.9" y="6.9" width="3" height="2" fill="#000"/><rect x="1.9" y="9.9" width="2.1" height="2.1" fill="#000"/><rect x="4.9" y="9.9" width="1.2" height="2.1" fill="#000"/><circle cx="10.9" cy="10.9" r="4.6" fill="#0dcaf0"/><circle cx="10.9" cy="10.9" r="2.74" fill="#000"/><rect x="10.10" y="7.10" width="1.60" height="3.80" fill="#000" transform="rotate(0 10.9 10.9)"/><rect x="10.10" y="7.10" width="1.60" height="3.80" fill="#000" transform="rotate(45 10.9 10.9)"/><rect x="10.10" y="7.10" width="1.60" height="3.80" fill="#000" transform="rotate(90 10.9 10.9)"/><rect x="10.10" y="7.10" width="1.60" height="3.80" fill="#000" transform="rotate(135 10.9 10.9)"/><rect x="10.10" y="7.10" width="1.60" height="3.80" fill="#000" transform="rotate(180 10.9 10.9)"/><rect x="10.10" y="7.10" width="1.60" height="3.80" fill="#000" transform="rotate(225 10.9 10.9)"/><rect x="10.10" y="7.10" width="1.60" height="3.80" fill="#000" transform="rotate(270 10.9 10.9)"/><rect x="10.10" y="7.10" width="1.60" height="3.80" fill="#000" transform="rotate(315 10.9 10.9)"/><circle cx="10.9" cy="10.9" r="1.06" fill="#0dcaf0"/></svg>
<svg style="position:absolute;left:115px;top:63px" width="15" height="14" viewBox="0 0 15 14"><rect x="2" y="0" width="12.1" height="1.7" rx="0.4" fill="#0dcaf0"/><rect x="2" y="0" width="1.4" height="13" fill="#0dcaf0"/><rect x="10.7" y="0" width="1.4" height="13.6" fill="#0dcaf0"/><path d="M0.3 12.2H11.8V14H1.5Z" fill="#0dcaf0"/><rect x="4" y="2" width="5" height="1" fill="#0dcaf0"/><rect x="4" y="4" width="6" height="1" fill="#0dcaf0"/><rect x="4" y="6" width="4" height="1" fill="#0dcaf0"/><rect x="4" y="8" width="5" height="1" fill="#0dcaf0"/><rect x="4" y="10" width="6" height="1" fill="#0dcaf0"/></svg>
<svg style="position:absolute;left:181px;top:63px" width="14" height="14" viewBox="0 0 14 14"><circle cx="5.3" cy="5" r="4" fill="none" stroke="#0dcaf0" stroke-width="2"/><path d="M8.2 8L13.3 12.6" stroke="#0dcaf0" stroke-width="2.2"/></svg>
<svg style="position:absolute;left:269px;top:63px" width="13" height="15" viewBox="0 0 13 15"><path d="M0 3A6.2 3 0 0 1 12.4 3V11A6.2 3.1 0 0 1 0 11Z" fill="#0dcaf0"/><ellipse cx="6.2" cy="2.8" rx="3.9" ry="1.1" fill="#343a40"/><path d="M-0.2 6.3Q6.2 9.6 12.6 6.3" fill="none" stroke="#343a40" stroke-width="0.9"/><path d="M-0.2 10.2Q6.2 13.5 12.6 10.2" fill="none" stroke="#343a40" stroke-width="0.9"/></svg>
<svg style="position:absolute;left:350px;top:63px" width="15" height="14" viewBox="0 0 15 14"><path d="M2 0H9.2V4H14.3V14H5V12H2Z" fill="#0dcaf0"/><path d="M10.1 0L14.3 3.9H10.1Z" fill="#0dcaf0"/><path d="M-0.6 8.6L4.6 4.6V6.6H8.8V10.8H4.6V12.8Z" fill="#343a40"/><path d="M0.3 8.7L4 5.9V7.4H8V10.1H4V11.6Z" fill="#0dcaf0"/><rect x="2" y="13" width="1.2" height="1" fill="#0dcaf0"/></svg>
<svg style="position:absolute;left:434px;top:63px" width="15" height="14" viewBox="0 0 15 14"><path d="M2 0H9.2V4H14.3V14H5V13H2Z" fill="#0dcaf0"/><path d="M10.1 0L14.3 3.9H10.1Z" fill="#0dcaf0"/><path d="M-1 6.4H4V3.6L9.6 8.9L4 14.2V11.6H-1Z" fill="#343a40"/><path d="M0 7.1H4.7V4.9L8.7 8.9L4.7 12.9V10.8H0Z" fill="#0dcaf0"/><rect x="2" y="12.8" width="1.2" height="1.2" fill="#0dcaf0"/></svg>
<svg style="position:absolute;left:524px;top:63px" width="14" height="14" viewBox="0 0 14 14"><rect x="0" y="1" width="14" height="2" fill="#0dcaf0"/><rect x="1.7999999999999998" y="-0.20000000000000018" width="4.4" height="4.4" rx="1.3" fill="#0dcaf0"/><rect x="3.2" y="1.2" width="1.6" height="1.6" fill="#343a40"/><rect x="0" y="6" width="14" height="2" fill="#0dcaf0"/><rect x="7.8" y="4.8" width="4.4" height="4.4" rx="1.3" fill="#0dcaf0"/><rect x="9.2" y="6.2" width="1.6" height="1.6" fill="#343a40"/><rect x="0" y="11" width="14" height="2" fill="#0dcaf0"/><rect x="1.7999999999999998" y="9.8" width="4.4" height="4.4" rx="1.3" fill="#0dcaf0"/><rect x="3.2" y="11.2" width="1.6" height="1.6" fill="#343a40"/></svg>
<svg style="position:absolute;left:644px;top:65px" width="14" height="10" viewBox="0 0 14 10"><rect x="0" y="0" width="14" height="10" fill="#0dcaf0"/><circle cx="4" cy="3.2" r="1.6" fill="#343a40"/><path d="M3.3 4.5H4.7L5.1 6.5L7 7.8H1L2.9 6.5Z" fill="#343a40"/><rect x="8" y="2.3" width="4.8" height="1" fill="#343a40"/><rect x="8" y="4.3" width="4.8" height="1" fill="#343a40"/><rect x="8" y="6.3" width="4.8" height="1" fill="#343a40"/></svg>
<svg style="position:absolute;left:752px;top:64px" width="14" height="12" viewBox="0 0 14 12"><circle cx="4" cy="8" r="2.81" fill="#0dcaf0"/><rect x="3.18" y="4.10" width="1.64" height="3.90" fill="#0dcaf0" transform="rotate(0 4 8)"/><rect x="3.18" y="4.10" width="1.64" height="3.90" fill="#0dcaf0" transform="rotate(45 4 8)"/><rect x="3.18" y="4.10" width="1.64" height="3.90" fill="#0dcaf0" transform="rotate(90 4 8)"/><rect x="3.18" y="4.10" width="1.64" height="3.90" fill="#0dcaf0" transform="rotate(135 4 8)"/><rect x="3.18" y="4.10" width="1.64" height="3.90" fill="#0dcaf0" transform="rotate(180 4 8)"/><rect x="3.18" y="4.10" width="1.64" height="3.90" fill="#0dcaf0" transform="rotate(225 4 8)"/><rect x="3.18" y="4.10" width="1.64" height="3.90" fill="#0dcaf0" transform="rotate(270 4 8)"/><rect x="3.18" y="4.10" width="1.64" height="3.90" fill="#0dcaf0" transform="rotate(315 4 8)"/><circle cx="4" cy="8" r="1.09" fill="#343a40"/><circle cx="10" cy="4" r="2.81" fill="#0dcaf0"/><rect x="9.18" y="0.10" width="1.64" height="3.90" fill="#0dcaf0" transform="rotate(0 10 4)"/><rect x="9.18" y="0.10" width="1.64" height="3.90" fill="#0dcaf0" transform="rotate(45 10 4)"/><rect x="9.18" y="0.10" width="1.64" height="3.90" fill="#0dcaf0" transform="rotate(90 10 4)"/><rect x="9.18" y="0.10" width="1.64" height="3.90" fill="#0dcaf0" transform="rotate(135 10 4)"/><rect x="9.18" y="0.10" width="1.64" height="3.90" fill="#0dcaf0" transform="rotate(180 10 4)"/><rect x="9.18" y="0.10" width="1.64" height="3.90" fill="#0dcaf0" transform="rotate(225 10 4)"/><rect x="9.18" y="0.10" width="1.64" height="3.90" fill="#0dcaf0" transform="rotate(270 10 4)"/><rect x="9.18" y="0.10" width="1.64" height="3.90" fill="#0dcaf0" transform="rotate(315 10 4)"/><circle cx="10" cy="4" r="1.09" fill="#343a40"/></svg>
<svg style="position:absolute;left:854px;top:63px" width="14" height="14" viewBox="0 0 14 14"><rect x="0" y="0" width="4" height="2.2" fill="#0dcaf0"/><rect x="0" y="2.9" width="4" height="1.3" fill="#0dcaf0"/><rect x="0" y="4.9" width="4" height="1.1" fill="#0dcaf0"/><rect x="2.9" y="0" width="1.1" height="6" fill="#0dcaf0"/><rect x="0" y="8" width="4" height="2.2" fill="#0dcaf0"/><rect x="0" y="10.9" width="4" height="1.3" fill="#0dcaf0"/><rect x="0" y="12.9" width="4" height="1.1" fill="#0dcaf0"/><rect x="2.9" y="8" width="1.1" height="6" fill="#0dcaf0"/><rect x="10" y="2" width="4" height="2" fill="#0dcaf0"/><rect x="10" y="4.7" width="4" height="1.4" fill="#0dcaf0"/><rect x="10" y="6.8" width="4" height="1.4" fill="#0dcaf0"/><rect x="10" y="8.9" width="4" height="1.1" fill="#0dcaf0"/><rect x="10" y="2" width="1.3" height="8" fill="#0dcaf0"/><path d="M5.3 2.6H7L8.8 4.7" fill="none" stroke="#0dcaf0" stroke-width="1.1"/><path d="M8.8 6.3H6.5V9.4L5.3 10.4" fill="none" stroke="#0dcaf0" stroke-width="1.1"/></svg>
<svg style="position:absolute;left:85px;top:269px" width="9" height="12" viewBox="0 0 9 12"><path d="M4.5 0L8.6 4.6H0.4Z" fill="#0dcaf0"/><path d="M0.9 6.4H8.1L4.5 10.8Z" fill="none" stroke="#0dcaf0" stroke-width="1"/></svg>
<svg style="position:absolute;left:642px;top:268px" width="15" height="15" viewBox="0 0 15 15"><circle cx="7.5" cy="7.5" r="6.5" fill="none" stroke="#0dcaf0" stroke-width="1.4"/><path d="M5.3 5.8C5.3 3.2 9.7 3.2 9.7 5.8C9.7 7.3 7.5 7.4 7.5 9" fill="none" stroke="#0dcaf0" stroke-width="1.4"/><rect x="6.7" y="10" width="1.6" height="1.6" fill="#0dcaf0"/></svg>
<svg style="position:absolute;left:21.5px;top:671.5px" width="30" height="17" viewBox="0 0 30 17"><path d="M4.7 0.3L9.5 5.3H0Z" fill="#a3a6a9"/><path d="M4.7 5V14.6H28.5" fill="none" stroke="#a3a6a9" stroke-width="1"/></svg>
<svg style="position:absolute;left:386px;top:675.5px" width="12" height="8" viewBox="0 0 12 8"><path d="M1 1.2L6 6.2L11 1.2" fill="none" stroke="#dee2e6" stroke-width="1.8"/></svg>
</body></html>
